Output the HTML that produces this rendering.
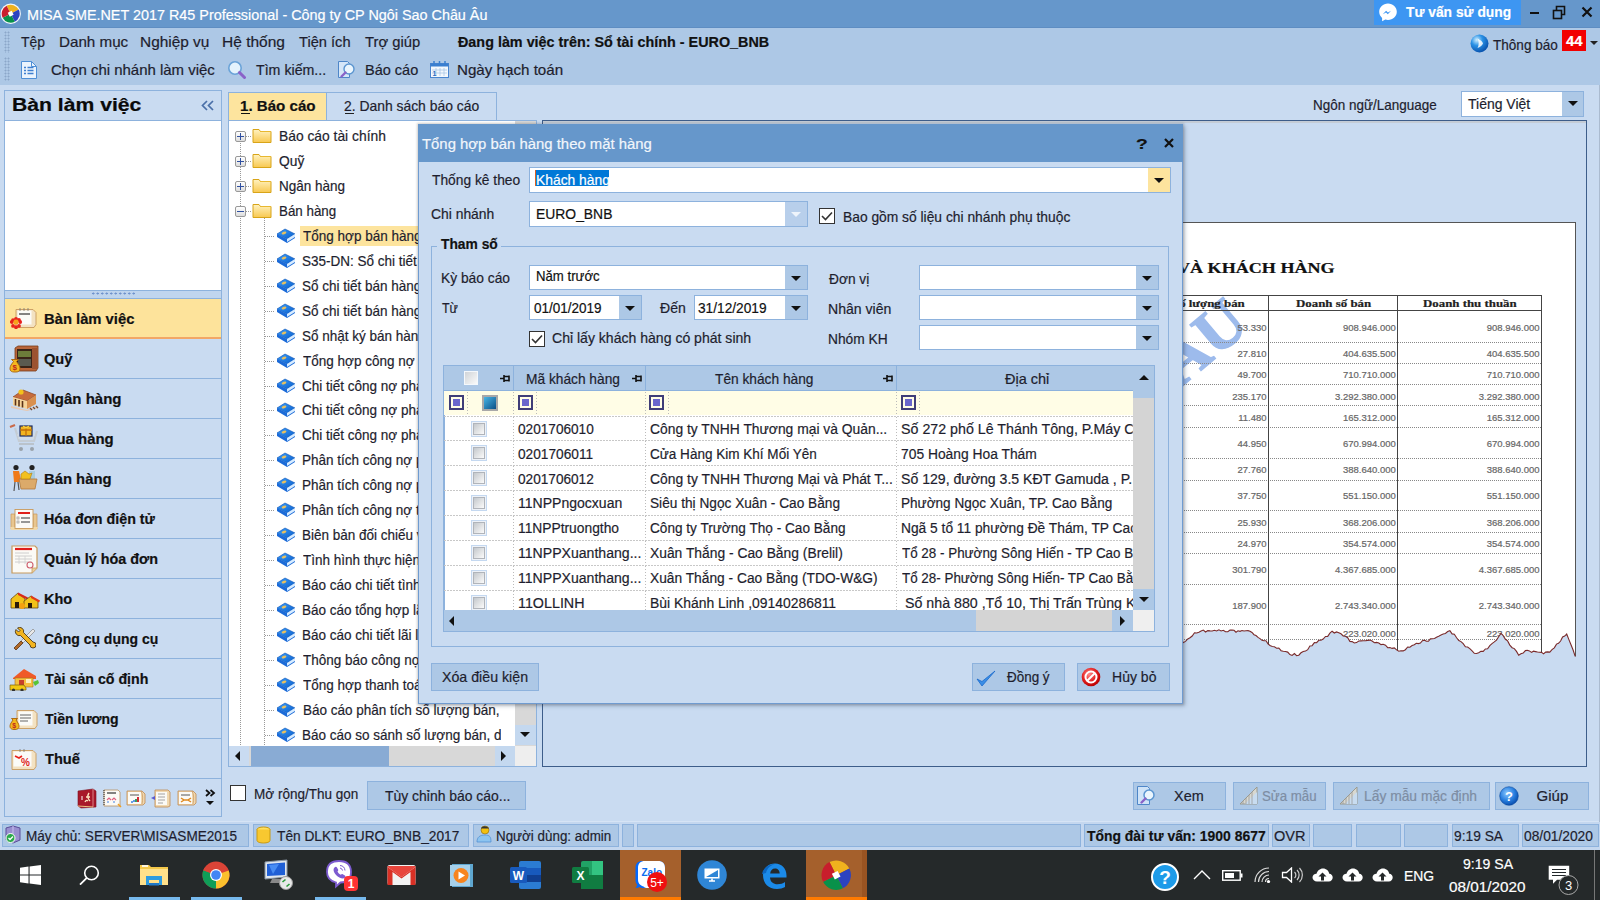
<!DOCTYPE html>
<html><head><meta charset="utf-8">
<style>
*{margin:0;padding:0;box-sizing:border-box}
html,body{width:1600px;height:900px;overflow:hidden;background:#c9dbf1;font-family:"Liberation Sans",sans-serif;font-size:14px;color:#1b1b2b}
.a{position:absolute}
.t{position:absolute;white-space:nowrap;line-height:20px;-webkit-text-stroke:0.2px currentColor}
</style></head><body>
<div class="a" style="left:0px;top:0px;width:1600px;height:28px;background:#6697cb"></div>
<div class="a" style="left:0px;top:28px;width:1600px;height:57px;background:#adc8e6"></div>
<div class="a" style="left:0px;top:27px;width:1600px;height:1px;background:#5e8dc2"></div>
<div class="a" style="left:0px;top:85px;width:1600px;height:765px;background:#c9dbf1"></div>
<svg class="a" style="left:0px;top:3px" width="22" height="22" viewBox="0 0 22 22"><circle cx="10.7" cy="10.7" r="10.2" fill="#f4f6fa"/><path d="M10.7 10.7L6.61 2.68A9 9 0 0 1 18.72 6.61Z" fill="#f0b21e"/><path d="M10.7 10.7L18.72 6.61A9 9 0 0 1 14.79 18.72Z" fill="#2c43c0"/><path d="M10.7 10.7L14.79 18.72A9 9 0 0 1 2.68 14.79Z" fill="#08914a"/><path d="M10.7 10.7L2.68 14.79A9 9 0 0 1 6.61 2.68Z" fill="#c81e2c"/><rect x="8.5" y="8.5" width="4.4" height="4.4" transform="rotate(-27 10.7 10.7)" fill="#fff"/></svg>
<div class="t" style="left:27.07px;top:5.00px;font-size:15.5px;font-weight:400;color:#ffffff;font-family:'Liberation Sans';transform:scaleX(0.9273);transform-origin:0 0;">MISA SME.NET 2017 R45 Professional - Công ty CP Ngôi Sao Châu Âu</div>
<div class="a" style="left:1374px;top:0px;width:147px;height:25px;background:#3d96f2"></div>
<svg class="a" style="left:1378px;top:2px" width="20" height="20" viewBox="0 0 20 20"><path d="M10 1.5C5 1.5 1.2 5.2 1.2 9.8c0 2.5 1.1 4.6 2.9 6.1v3.4l3.2-1.8c.9.3 1.8.4 2.7.4 5 0 8.8-3.7 8.8-8.2S15 1.5 10 1.5z" fill="#fff"/><path d="M4.8 12.3l3.3-3.6 1.8 1.8 3.2-1.8-3.3 3.6-1.8-1.8z" fill="#3d96f2"/></svg>
<div class="t" style="left:1406.00px;top:2.00px;font-size:15px;font-weight:700;color:#ffffff;font-family:'Liberation Sans';transform:scaleX(0.9204);transform-origin:0 0;">Tư vấn sử dụng</div>
<div class="a" style="left:1530px;top:12px;width:9px;height:2px;background:#111"></div>
<svg class="a" style="left:1552px;top:5px" width="15" height="15" viewBox="0 0 15 15"><rect x="1.5" y="5.5" width="8" height="8" fill="none" stroke="#111" stroke-width="1.6"/><path d="M4.5 5.5V1.5h8v8h-3" fill="none" stroke="#111" stroke-width="1.6"/></svg>
<svg class="a" style="left:1581px;top:6px" width="12" height="12" viewBox="0 0 12 12"><path d="M1.5 1.5L10.5 10.5M10.5 1.5L1.5 10.5" stroke="#111" stroke-width="2.2"/></svg>
<div class="a" style="left:4px;top:31px;width:6px;height:22px;background-image:radial-gradient(circle,#8ba7c9 0.9px,transparent 1.1px);background-size:3px 3px"></div>
<div class="a" style="left:4px;top:57px;width:6px;height:24px;background-image:radial-gradient(circle,#8ba7c9 0.9px,transparent 1.1px);background-size:3px 3px"></div>
<div class="t" style="left:21.00px;top:32.00px;font-size:14.5px;font-weight:400;color:#1e1e2e;font-family:'Liberation Sans';transform:scaleX(0.9600);transform-origin:0 0;">Tệp</div>
<div class="t" style="left:58.95px;top:32.00px;font-size:14.5px;font-weight:400;color:#1e1e2e;font-family:'Liberation Sans';transform:scaleX(1.0469);transform-origin:0 0;">Danh mục</div>
<div class="t" style="left:139.94px;top:32.00px;font-size:14.5px;font-weight:400;color:#1e1e2e;font-family:'Liberation Sans';transform:scaleX(1.0625);transform-origin:0 0;">Nghiệp vụ</div>
<div class="t" style="left:221.93px;top:32.00px;font-size:14.5px;font-weight:400;color:#1e1e2e;font-family:'Liberation Sans';transform:scaleX(1.0702);transform-origin:0 0;">Hệ thống</div>
<div class="t" style="left:299.00px;top:32.00px;font-size:14.5px;font-weight:400;color:#1e1e2e;font-family:'Liberation Sans';transform:scaleX(1.0100);transform-origin:0 0;">Tiện ích</div>
<div class="t" style="left:365.00px;top:32.00px;font-size:14.5px;font-weight:400;color:#1e1e2e;font-family:'Liberation Sans';transform:scaleX(1.0185);transform-origin:0 0;">Trợ giúp</div>
<div class="t" style="left:458.00px;top:32.00px;font-size:14.5px;font-weight:700;color:#111;font-family:'Liberation Sans';transform:scaleX(0.9904);transform-origin:0 0;">Đang làm việc trên: Sổ tài chính - EURO_BNB</div>
<svg class="a" style="left:20px;top:60px" width="18" height="19" viewBox="0 0 18 19"><path d="M1.5 1.5h10l5 5v12h-15z" fill="#eaf3fd" stroke="#4f8fd6"/><path d="M11.5 1.5v5h5" fill="none" stroke="#4f8fd6"/><path d="M4 7.5h2M4 10.5h2M4 13.5h2M7.5 7.5h6M7.5 10.5h6M7.5 13.5h6" stroke="#3f7fd0" stroke-width="1.3"/></svg>
<div class="t" style="left:51.47px;top:60.00px;font-size:14.5px;font-weight:400;color:#1e1e2e;font-family:'Liberation Sans';transform:scaleX(1.0318);transform-origin:0 0;">Chọn chi nhánh làm việc</div>
<svg class="a" style="left:227px;top:60px" width="20" height="19" viewBox="0 0 20 19"><circle cx="8" cy="8" r="6.2" fill="#e4f3fd" stroke="#6aa3d8" stroke-width="1.6"/><path d="M12.5 12.5l5 5" stroke="#8a62c8" stroke-width="3" stroke-linecap="round"/></svg>
<div class="t" style="left:256.00px;top:60.00px;font-size:14.5px;font-weight:400;color:#1e1e2e;font-family:'Liberation Sans';transform:scaleX(0.9789);transform-origin:0 0;">Tìm kiếm...</div>
<svg class="a" style="left:337px;top:60px" width="19" height="19" viewBox="0 0 19 19"><path d="M1.5 1.5h9l2 2v14h-11z" fill="#d5e6f8" stroke="#4e86c8"/><circle cx="12" cy="9" r="5" fill="#eaf5fd" stroke="#5b95d0" stroke-width="1.4"/><path d="M8.5 12.5l-4 4" stroke="#8a62c8" stroke-width="2.4" stroke-linecap="round"/></svg>
<div class="t" style="left:365.00px;top:60.00px;font-size:14.5px;font-weight:400;color:#1e1e2e;font-family:'Liberation Sans';">Báo cáo</div>
<svg class="a" style="left:430px;top:61px" width="19" height="17" viewBox="0 0 19 17"><rect x="0.5" y="2.5" width="18" height="14" fill="#f3f8fd" stroke="#4a86cf"/><rect x="0.5" y="2.5" width="18" height="3" fill="#3a7fd0"/><path d="M4 0v5M9.5 0v5M15 0v5" stroke="#3a7fd0" stroke-width="1.5"/><path d="M2 9h15M2 12h15M6 7v8M10 7v8M14 7v8" stroke="#a9c6e6" stroke-width=".8"/><text x="2.5" y="14.5" font-size="7" font-family="Liberation Sans" fill="#2a6fc0" font-weight="bold">1</text></svg>
<div class="t" style="left:456.95px;top:60.00px;font-size:14.5px;font-weight:400;color:#1e1e2e;font-family:'Liberation Sans';transform:scaleX(1.0450);transform-origin:0 0;">Ngày hạch toán</div>
<svg class="a" style="left:1470px;top:34px" width="19" height="19" viewBox="0 0 19 19"><defs><radialGradient id="gl" cx="35%" cy="30%" r="70%"><stop offset="0" stop-color="#cdeeff"/><stop offset=".45" stop-color="#2a92e6"/><stop offset="1" stop-color="#0a55b0"/></radialGradient></defs><circle cx="9.5" cy="9.5" r="9" fill="url(#gl)"/><path d="M7.5 4.5c3 1.5 5 3 5.5 5-1 2.5-3 3.5-5.5 4.5 1.5-2.5 1.5-6.5 0-9.5z" fill="#fff" opacity=".85"/></svg>
<div class="t" style="left:1493.00px;top:35.00px;font-size:14.5px;font-weight:400;color:#1e1e2e;font-family:'Liberation Sans';transform:scaleX(0.9348);transform-origin:0 0;">Thông báo</div>
<div class="a" style="left:1562px;top:30px;width:24px;height:21px;background:#f20000"></div>
<div class="t" style="left:1566.00px;top:31.00px;font-size:14px;font-weight:700;color:#fff;font-family:'Liberation Sans';transform:scaleX(1.0625);transform-origin:0 0;">44</div>
<svg class="a" style="left:1590px;top:41px" width="8" height="5" viewBox="0 0 8 5"><path d="M0 0h8L4 4z" fill="#222"/></svg>
<div class="a" style="left:4px;top:90px;width:218px;height:727px;border:1px solid #8db2dd;background:#c9dbf1"></div>
<div class="a" style="left:5px;top:120px;width:216px;height:1px;background:#8db2dd"></div>
<div class="t" style="left:12.22px;top:95.00px;font-size:18px;font-weight:700;color:#0a0a0a;font-family:'Liberation Sans';transform:scaleX(1.1750);transform-origin:0 0;">Bàn làm việc</div>
<svg class="a" style="left:201px;top:100px" width="13" height="11" viewBox="0 0 13 11"><path d="M6 1L1.5 5.5 6 10M12 1L7.5 5.5 12 10" fill="none" stroke="#4a6fa8" stroke-width="1.7"/></svg>
<div class="a" style="left:5px;top:121px;width:216px;height:169px;background:#fff"></div>
<div class="a" style="left:5px;top:290px;width:216px;height:8px;background:#c0d5ee;border-top:1px solid #8db2dd"></div>
<div class="a" style="left:91px;top:292px;width:44px;height:3px;background-image:radial-gradient(circle,#6f92cc 0.9px,transparent 1.2px);background-size:4.5px 3px"></div>
<div class="a" style="left:5px;top:298px;width:216px;height:1px;background:#8db2dd"></div>
<div class="a" style="left:5px;top:299px;width:216px;height:38px;background:#fde39b"></div>
<div class="a" style="left:5px;top:337px;width:216px;height:2px;background:#f2a766"></div>
<div class="t" style="left:44.28px;top:309.00px;font-size:14.5px;font-weight:700;color:#111;font-family:'Liberation Sans';transform:scaleX(1.0195);transform-origin:0 0;">Bàn làm việc</div>
<div class="a" style="left:5px;top:378px;width:216px;height:1px;background:#8db2dd"></div>
<div class="t" style="left:44.29px;top:349.00px;font-size:14.5px;font-weight:700;color:#111;font-family:'Liberation Sans';transform:scaleX(1.0074);transform-origin:0 0;">Quỹ</div>
<div class="a" style="left:5px;top:418px;width:216px;height:1px;background:#8db2dd"></div>
<div class="t" style="left:44.27px;top:389.00px;font-size:14.5px;font-weight:700;color:#111;font-family:'Liberation Sans';transform:scaleX(1.0342);transform-origin:0 0;">Ngân hàng</div>
<div class="a" style="left:5px;top:458px;width:216px;height:1px;background:#8db2dd"></div>
<div class="t" style="left:44.27px;top:429.00px;font-size:14.5px;font-weight:700;color:#111;font-family:'Liberation Sans';transform:scaleX(1.0303);transform-origin:0 0;">Mua hàng</div>
<div class="a" style="left:5px;top:498px;width:216px;height:1px;background:#8db2dd"></div>
<div class="t" style="left:44.28px;top:469.00px;font-size:14.5px;font-weight:700;color:#111;font-family:'Liberation Sans';transform:scaleX(1.0219);transform-origin:0 0;">Bán hàng</div>
<div class="a" style="left:5px;top:538px;width:216px;height:1px;background:#8db2dd"></div>
<div class="t" style="left:44.32px;top:509.00px;font-size:14.5px;font-weight:700;color:#111;font-family:'Liberation Sans';transform:scaleX(0.9848);transform-origin:0 0;">Hóa đơn điện tử</div>
<div class="a" style="left:5px;top:578px;width:216px;height:1px;background:#8db2dd"></div>
<div class="t" style="left:44.31px;top:549.00px;font-size:14.5px;font-weight:700;color:#111;font-family:'Liberation Sans';transform:scaleX(0.9912);transform-origin:0 0;">Quản lý hóa đơn</div>
<div class="a" style="left:5px;top:618px;width:216px;height:1px;background:#8db2dd"></div>
<div class="t" style="left:44.30px;top:589.00px;font-size:14.5px;font-weight:700;color:#111;font-family:'Liberation Sans';transform:scaleX(0.9963);transform-origin:0 0;">Kho</div>
<div class="a" style="left:5px;top:658px;width:216px;height:1px;background:#8db2dd"></div>
<div class="t" style="left:44.34px;top:629.00px;font-size:14.5px;font-weight:700;color:#111;font-family:'Liberation Sans';transform:scaleX(0.9650);transform-origin:0 0;">Công cụ dụng cụ</div>
<div class="a" style="left:5px;top:698px;width:216px;height:1px;background:#8db2dd"></div>
<div class="t" style="left:45.30px;top:669.00px;font-size:14.5px;font-weight:700;color:#111;font-family:'Liberation Sans';transform:scaleX(0.9800);transform-origin:0 0;">Tài sản cố định</div>
<div class="a" style="left:5px;top:738px;width:216px;height:1px;background:#8db2dd"></div>
<div class="t" style="left:45.30px;top:709.00px;font-size:14.5px;font-weight:700;color:#111;font-family:'Liberation Sans';transform:scaleX(0.9680);transform-origin:0 0;">Tiền lương</div>
<div class="a" style="left:5px;top:778px;width:216px;height:1px;background:#8db2dd"></div>
<div class="t" style="left:45.30px;top:749.00px;font-size:14.5px;font-weight:700;color:#111;font-family:'Liberation Sans';transform:scaleX(1.0059);transform-origin:0 0;">Thuế</div>
<div class="a" style="left:5px;top:778px;width:216px;height:1px;background:#8db2dd"></div>
<svg class="a" style="left:10px;top:307px" width="29" height="22" viewBox="0 0 29 22"><path d="M6 2.5h17l3 3v12l-2 3H6z" fill="#f3e2c2" stroke="#c89a5c" stroke-width=".9"/><path d="M7.5 3.5h14v14h-14z" fill="#fbfbf8"/><path d="M9 7h11" stroke="#333" stroke-width="1.2"/><path d="M10 1v3M14 1v3M18 1v3" stroke="#777" stroke-width=".8"/><circle cx="10.20" cy="15.00" r="1.9" fill="#e8231c"/><circle cx="8.97" cy="18.97" r="1.9" fill="#e8231c"/><circle cx="6.00" cy="20.20" r="1.9" fill="#e8231c"/><circle cx="3.03" cy="18.97" r="1.9" fill="#e8231c"/><circle cx="1.80" cy="15.01" r="1.9" fill="#e8231c"/><circle cx="3.02" cy="13.04" r="1.9" fill="#e8231c"/><circle cx="5.99" cy="11.80" r="1.9" fill="#e8231c"/><circle cx="8.96" cy="13.02" r="1.9" fill="#e8231c"/><circle cx="6" cy="15" r="2.6" fill="#f7a21a"/></svg>
<svg class="a" style="left:9px;top:345px" width="30" height="29" viewBox="0 0 30 29"><path d="M6 3l3-2h20v22l-2 3H6z" fill="#b8653a" stroke="#7a3a18" stroke-width=".8"/><rect x="8" y="4" width="15" height="19" fill="#3a2418"/><rect x="9" y="6" width="13" height="6" fill="#6d7c3a"/><rect x="9" y="14" width="13" height="7" fill="#5a5a50"/><path d="M23 3h5v21h-5z" fill="#9c5230"/><path d="M5 27c-4 0-5-3-3-7l2.5-3.5-2-2h7l-2 2L10 20c2 4 1 7-3 7z" fill="#f4b81e" stroke="#a8620c" stroke-width=".9"/><text x="3.6" y="25" font-size="8" fill="#c0261e" font-family="Liberation Sans" font-weight="bold">$</text></svg>
<svg class="a" style="left:10px;top:387px" width="30" height="24" viewBox="0 0 30 24"><path d="M3 10L13 3l13 5-9 6z" fill="#c76c3c" stroke="#8a4420" stroke-width=".7"/><path d="M17 14l9-6v9l-9 5z" fill="#d9904e"/><path d="M3 10l14 4v8L3 18z" fill="#f6d49a"/><path d="M5.5 12v6.5M9 13v6.5M12.5 14v6.5" stroke="#5a3218" stroke-width="1.6"/><circle cx="11" cy="5" r="2.6" fill="#f3c21c"/><path d="M1 19l16 4 10-4 1 2-11 3L1 21z" fill="#e8c8b0"/><path d="M20 21l2 2M23 20l2 2M26 19l2 2" stroke="#6b4a38" stroke-width="1.3"/></svg>
<svg class="a" style="left:9px;top:423px" width="30" height="31" viewBox="0 0 30 31"><path d="M1 4l5-2" stroke="#c96a4a" stroke-width="2"/><path d="M6 5l4 13h15l3-10" fill="none" stroke="#c4ccd4" stroke-width="2.2"/><path d="M8 12h18M9 15h16" stroke="#d8dde2" stroke-width="1.2"/><path d="M10 21h15" stroke="#b8c0c8" stroke-width="1.8"/><circle cx="12" cy="26" r="2" fill="#9aa2aa"/><circle cx="23" cy="26" r="2" fill="#9aa2aa"/><rect x="11" y="3" width="12" height="10" fill="#f2b420" stroke="#1c2a60" stroke-width="1.2"/><path d="M17 3v10M11 7h12" stroke="#c2700a" stroke-width="1.3"/><path d="M14 3l3 2 3-2" fill="none" stroke="#f7d040" stroke-width="1.4"/></svg>
<svg class="a" style="left:10px;top:464px" width="29" height="31" viewBox="0 0 29 31"><circle cx="6" cy="3.5" r="2.6" fill="#222"/><path d="M3 7h6l2 9-2 2H4z" fill="#f07a1a"/><path d="M5 18l-1 9M8 18l1 8" stroke="#555" stroke-width="1.2"/><circle cx="22" cy="3.5" r="2.6" fill="#222"/><path d="M19 7h6v9h-6z" fill="#a8cce0"/><path d="M9 15h18l-2 10H11z" fill="#dcaa6a" stroke="#b27a3c" stroke-width=".8"/><path d="M11 10l4-3 4 3 3-1-2 6h-9z" fill="#f2c020" stroke="#b07a10" stroke-width=".6"/></svg>
<svg class="a" style="left:9px;top:508px" width="30" height="23" viewBox="0 0 30 23"><path d="M2 6h4v15H2zM24 6h4v15h-4z" fill="#e8c690" stroke="#c89a5c" stroke-width=".7"/><path d="M1 19h28l-1 3H2z" fill="#f1d8a8"/><rect x="6" y="1.5" width="18" height="19" fill="#fbfaf6" stroke="#c89a5c" stroke-width=".9"/><path d="M9 5h12" stroke="#e0201a" stroke-width="2"/><rect x="8" y="9" width="2" height="2" fill="none" stroke="#888" stroke-width=".6"/><rect x="8" y="13" width="2" height="2" fill="none" stroke="#888" stroke-width=".6"/><path d="M12 10h9M12 14h9" stroke="#777" stroke-width="1.4"/></svg>
<svg class="a" style="left:10px;top:544px" width="29" height="30" viewBox="0 0 29 30"><path d="M2 2h23l2 2v20l-5 5H2z" fill="#fbfaf6" stroke="#c89a5c" stroke-width="1.2"/><path d="M22 29v-5h5" fill="#e8d0a0" stroke="#c89a5c" stroke-width=".8"/><path d="M5 5h17" stroke="#e01e1a" stroke-width="2.2"/><path d="M5 9h14M5 12h17M5 15h17M5 18h17" stroke="#c8c8c8" stroke-width=".9"/><path d="M9 12v8M15 12v8" stroke="#d0d0d0" stroke-width=".8"/><circle cx="20" cy="21" r="3" fill="none" stroke="#d06070" stroke-width="1.1"/></svg>
<svg class="a" style="left:9px;top:591px" width="31" height="19" viewBox="0 0 31 19"><path d="M2 8L9 2l7 6v9H2z" fill="#f2c21a" stroke="#6a4a10" stroke-width=".8"/><path d="M9 1.5l10 5-1 2-9-4.5z" fill="#d82a1a"/><path d="M15 10l7-5 7 5v7h-14z" fill="#f2c21a" stroke="#6a4a10" stroke-width=".8"/><path d="M22 4.5l9 5-1 2-8-4.5z" fill="#e03a1a"/><path d="M6 17v-6h4v6M19 17v-5h4v5" fill="#2a1a08"/><circle cx="13" cy="15" r="3" fill="#f4a010"/></svg>
<svg class="a" style="left:12px;top:627px" width="24" height="23" viewBox="0 0 24 23"><path d="M21 2l2 2-12 12-2-2z" fill="#e8e8e8" stroke="#888" stroke-width=".7"/><path d="M9 14l-7 7 2 2 7-7z" fill="#b06a2a" stroke="#5a3210" stroke-width=".8"/><path d="M4 2.5a4 4 0 0 0 4.5 6L18 18a3 3 0 1 0 3-3l-9.5-9.5A4 4 0 0 0 5.5 1L8 3.5 6.5 5z" fill="#f2b420" stroke="#3a2a10" stroke-width=".8"/></svg>
<svg class="a" style="left:9px;top:667px" width="31" height="24" viewBox="0 0 31 24"><path d="M4 11L15 2l12 7v3H4z" fill="#f05a28"/><path d="M6 11h18v9H6z" fill="#f6c040" stroke="#a87020" stroke-width=".6"/><path d="M10 13h5v7h-5z" fill="#c8402a"/><path d="M17 12h5v4h-5z" fill="#fff0c0"/><path d="M1 18h14l2 3v2H1z" fill="#f2c812" stroke="#7a6010" stroke-width=".7"/><circle cx="4.5" cy="23" r="1.6" fill="#333"/><circle cx="13" cy="23" r="1.6" fill="#333"/><path d="M24 15l5-2 1 3-4 3z" fill="#56c436"/></svg>
<svg class="a" style="left:9px;top:708px" width="30" height="22" viewBox="0 0 30 22"><path d="M8 2.5h17l3 3v12l-2 3H8z" fill="#f3e2c2" stroke="#c89a5c" stroke-width=".9"/><path d="M9.5 3.5h14v14h-14z" fill="#fbfbf8"/><path d="M11 7h11M11 10h11M11 13h8" stroke="#666" stroke-width="1"/><path d="M5 21.5c-4 0-5-3-3-6.5l2-3-1.5-1.5h6L7 12l2 3c2 3.5 1 6.5-3 6.5z" fill="#f4b81e" stroke="#a8620c" stroke-width=".9"/><text x="3.3" y="20" font-size="7" fill="#c0261e" font-family="Liberation Sans" font-weight="bold">$</text></svg>
<svg class="a" style="left:10px;top:748px" width="29" height="23" viewBox="0 0 29 23"><path d="M2 2.5h21l3 3v13l-2 3H2z" fill="#f3e2c2" stroke="#c89a5c" stroke-width=".9"/><path d="M3.5 3.5h18v15h-18z" fill="#fbfbf8"/><path d="M10 1v3M14 1v3" stroke="#777" stroke-width=".8"/><path d="M5 8l4 2 3-2" fill="none" stroke="#e8201a" stroke-width="1.6"/><text x="11" y="18" font-size="10" fill="#e01e1a" font-family="Liberation Sans" font-weight="bold">%</text></svg>
<svg class="a" style="left:77px;top:788px" width="21" height="21" viewBox="0 0 21 21"><path d="M1 3l15-2 3 2v16l-15 1-3-2z" fill="#a8182a" stroke="#7a1020" stroke-width=".6"/><path d="M16 1v18" stroke="#e8a0a0" stroke-width=".8"/><path d="M1 18l15 1" stroke="#f0c080" stroke-width="1"/><path d="M4 9h2M4 11h2" stroke="#fff" stroke-width="1"/><path d="M8 14c1-2 2-2 3-1M12 5c-2 3-1 6 1 8M9 9h4" fill="none" stroke="#fbe4c0" stroke-width="1.4"/></svg>
<svg class="a" style="left:102px;top:788px" width="20" height="20" viewBox="0 0 20 20"><path d="M2 2h14l2 2v14H2z" fill="#fbfaf6" stroke="#b89060" stroke-width=".8"/><path d="M5 5h9" stroke="#333" stroke-width="1.2"/><path d="M2 2v16" stroke="#555" stroke-width="1.4" stroke-dasharray="1 1"/><path d="M5 12l2-2 2 2M10 12l2-2 2 2" stroke="#e06080" stroke-width="1.2" fill="none"/><path d="M5 14h2M11 14h2" stroke="#4080e0" stroke-width="1.2"/><path d="M16 16l3 3" stroke="#f0a020" stroke-width="1.5"/></svg>
<svg class="a" style="left:126px;top:789px" width="21" height="17" viewBox="0 0 21 17"><path d="M1 2h15l3 3v9l-2 2H1z" fill="#f0d8b0" stroke="#c08a50" stroke-width=".8"/><path d="M2 3h13v12H2z" fill="#fbfaf6"/><path d="M15 2c2 3 2 9 1 13" stroke="#c08a50" stroke-width=".6" fill="none"/><path d="M4 6h9" stroke="#555" stroke-width="1"/><path d="M5 13h2M8 13v-2M10 13v-3M12 13v-5" stroke-width="1.6" stroke="#3a80e0"/><path d="M10 13v-3" stroke="#2aa040" stroke-width="1.6"/><path d="M12 13v-5" stroke="#e02020" stroke-width="1.8"/></svg>
<svg class="a" style="left:151px;top:789px" width="21" height="19" viewBox="0 0 21 19"><path d="M4 1h13l2 2v14l-2 1H4z" fill="#f0d8b0" stroke="#c08a50" stroke-width=".8"/><path d="M5 3h11v13H5z" fill="#fbfaf6"/><path d="M7 5h7M7 8h7M7 11h7M7 14h5" stroke="#999" stroke-width=".9"/><path d="M0 9l4-2v4z" fill="#5a5ad0"/></svg>
<svg class="a" style="left:177px;top:789px" width="21" height="17" viewBox="0 0 21 17"><path d="M1 2h15l3 3v9l-2 2H1z" fill="#f0d8b0" stroke="#c08a50" stroke-width=".8"/><path d="M2 3h13v12H2z" fill="#fbfaf6"/><path d="M15 2c2 3 2 9 1 13" stroke="#c08a50" stroke-width=".6" fill="none"/><path d="M4 6h9" stroke="#555" stroke-width="1"/><path d="M4 9l3 2-3 2M14 9l-3 2 3 2M7 11h4" stroke="#e08a20" stroke-width="1.5" fill="none"/></svg>
<svg class="a" style="left:204px;top:787px" width="12" height="22" viewBox="0 0 12 22"><path d="M2 3l3.5 3-3.5 3M6.5 3l3.5 3-3.5 3" fill="none" stroke="#111" stroke-width="1.8"/><path d="M2 14h8l-4 4z" fill="#111"/></svg>
<div class="a" style="left:228px;top:92px;width:269px;height:29px;border:1px solid #8db2dd;border-bottom:none;background:#c9dbf1"></div>
<div class="a" style="left:229px;top:93px;width:97px;height:28px;background:#fde49e"></div>
<div class="a" style="left:326px;top:93px;width:1px;height:28px;background:#8db2dd"></div>
<div class="t" style="left:239.96px;top:95.50px;font-size:14.5px;font-weight:700;color:#111;font-family:'Liberation Sans';transform:scaleX(1.0423);transform-origin:0 0;">1. Báo cáo</div>
<div class="a" style="left:241px;top:113px;width:9px;height:1px;background:#111"></div>
<div class="t" style="left:343.74px;top:95.80px;font-size:14.5px;font-weight:400;color:#1e1e2e;font-family:'Liberation Sans';transform:scaleX(0.9579);transform-origin:0 0;">2. Danh sách báo cáo</div>
<div class="a" style="left:345px;top:113px;width:9px;height:1px;background:#222"></div>
<div class="a" style="left:228px;top:120px;width:309px;height:647px;border:1px solid #8db2dd;background:#fff"></div>
<div class="a" style="left:240px;top:141px;width:1px;height:75px;background-image:linear-gradient(#999 50%,transparent 50%);background-size:1px 2px"></div>
<div class="a" style="left:264px;top:216px;width:1px;height:535px;background-image:linear-gradient(#999 50%,transparent 50%);background-size:1px 2px"></div>
<div class="a" style="left:240px;top:216px;width:1px;height:535px;background-image:linear-gradient(#999 50%,transparent 50%);background-size:1px 2px"></div>
<div class="a" style="left:235px;top:131px;width:11px;height:11px;border:1px solid #999;border-radius:2px;background:linear-gradient(#fff,#ddd)"></div>
<div class="a" style="left:237px;top:136px;width:7px;height:1px;background:#3050a0"></div>
<div class="a" style="left:240px;top:133px;width:1px;height:7px;background:#3050a0"></div>
<div class="a" style="left:246px;top:136px;width:6px;height:1px;background-image:linear-gradient(90deg,#999 50%,transparent 50%);background-size:2px 1px"></div>
<svg class="a" style="left:252px;top:127px" width="20" height="17" viewBox="0 0 20 17"><defs><linearGradient id="fg" x1="0" y1="0" x2="0" y2="1"><stop offset="0" stop-color="#fff2c0"/><stop offset="1" stop-color="#f8c850"/></linearGradient></defs><path d="M1 2.5h6l1.5 2H19v11H1z" fill="url(#fg)" stroke="#d8a418"/><path d="M8 4.5h11" stroke="#e8b830"/></svg>
<div class="t" style="left:278.68px;top:126.20px;font-size:15px;font-weight:400;color:#1e1e2e;font-family:'Liberation Sans';transform:scaleX(0.9219);transform-origin:0 0;">Báo cáo tài chính</div>
<div class="a" style="left:235px;top:156px;width:11px;height:11px;border:1px solid #999;border-radius:2px;background:linear-gradient(#fff,#ddd)"></div>
<div class="a" style="left:237px;top:161px;width:7px;height:1px;background:#3050a0"></div>
<div class="a" style="left:240px;top:158px;width:1px;height:7px;background:#3050a0"></div>
<div class="a" style="left:246px;top:161px;width:6px;height:1px;background-image:linear-gradient(90deg,#999 50%,transparent 50%);background-size:2px 1px"></div>
<svg class="a" style="left:252px;top:152px" width="20" height="17" viewBox="0 0 20 17"><defs><linearGradient id="fg1" x1="0" y1="0" x2="0" y2="1"><stop offset="0" stop-color="#fff2c0"/><stop offset="1" stop-color="#f8c850"/></linearGradient></defs><path d="M1 2.5h6l1.5 2H19v11H1z" fill="url(#fg1)" stroke="#d8a418"/><path d="M8 4.5h11" stroke="#e8b830"/></svg>
<div class="t" style="left:278.68px;top:151.13px;font-size:15px;font-weight:400;color:#1e1e2e;font-family:'Liberation Sans';transform:scaleX(0.9185);transform-origin:0 0;">Quỹ</div>
<div class="a" style="left:235px;top:181px;width:11px;height:11px;border:1px solid #999;border-radius:2px;background:linear-gradient(#fff,#ddd)"></div>
<div class="a" style="left:237px;top:186px;width:7px;height:1px;background:#3050a0"></div>
<div class="a" style="left:240px;top:183px;width:1px;height:7px;background:#3050a0"></div>
<div class="a" style="left:246px;top:186px;width:6px;height:1px;background-image:linear-gradient(90deg,#999 50%,transparent 50%);background-size:2px 1px"></div>
<svg class="a" style="left:252px;top:177px" width="20" height="17" viewBox="0 0 20 17"><defs><linearGradient id="fg2" x1="0" y1="0" x2="0" y2="1"><stop offset="0" stop-color="#fff2c0"/><stop offset="1" stop-color="#f8c850"/></linearGradient></defs><path d="M1 2.5h6l1.5 2H19v11H1z" fill="url(#fg2)" stroke="#d8a418"/><path d="M8 4.5h11" stroke="#e8b830"/></svg>
<div class="t" style="left:278.70px;top:176.06px;font-size:15px;font-weight:400;color:#1e1e2e;font-family:'Liberation Sans';transform:scaleX(0.9000);transform-origin:0 0;">Ngân hàng</div>
<div class="a" style="left:235px;top:206px;width:11px;height:11px;border:1px solid #999;border-radius:2px;background:linear-gradient(#fff,#ddd)"></div>
<div class="a" style="left:237px;top:211px;width:7px;height:1px;background:#3050a0"></div>
<div class="a" style="left:246px;top:211px;width:6px;height:1px;background-image:linear-gradient(90deg,#999 50%,transparent 50%);background-size:2px 1px"></div>
<svg class="a" style="left:252px;top:202px" width="20" height="17" viewBox="0 0 20 17"><defs><linearGradient id="fg3" x1="0" y1="0" x2="0" y2="1"><stop offset="0" stop-color="#fff2c0"/><stop offset="1" stop-color="#f8c850"/></linearGradient></defs><path d="M1 2.5h6l1.5 2H19v11H1z" fill="url(#fg3)" stroke="#d8a418"/><path d="M8 4.5h11" stroke="#e8b830"/></svg>
<div class="t" style="left:278.71px;top:200.99px;font-size:15px;font-weight:400;color:#1e1e2e;font-family:'Liberation Sans';transform:scaleX(0.8905);transform-origin:0 0;">Bán hàng</div>
<div class="a" style="left:300px;top:226px;width:118px;height:20px;background:#fde49e"></div>
<div class="a" style="left:265px;top:236px;width:10px;height:1px;background-image:linear-gradient(90deg,#999 50%,transparent 50%);background-size:2px 1px"></div>
<svg class="a" style="left:276px;top:228px" width="20" height="16" viewBox="0 0 20 16"><defs><linearGradient id="bk0" x1="0" y1="0" x2="1" y2="1"><stop offset="0" stop-color="#3aa0ff"/><stop offset="1" stop-color="#0a5cc8"/></linearGradient></defs><path d="M1 6l8-5 10 5-8 5z" fill="url(#bk0)" stroke="#0a4fb0" stroke-width=".6"/><path d="M1 6v3l10 6 8-5V6l-8 5z" fill="#1a6ad8"/><path d="M11 11l8-5v3l-8 5z" fill="#d8ecff"/><ellipse cx="8" cy="5" rx="2.5" ry="1.2" fill="#e8c060" transform="rotate(-20 8 5)"/></svg>
<div class="t" style="left:302.80px;top:225.92px;width:220.2px;overflow:hidden;font-size:15px;font-weight:400;color:#1e1e2e;font-family:'Liberation Sans';transform:scaleX(0.9000);transform-origin:0 0;">Tổng hợp bán hàng theo mặt hàng</div>
<div class="a" style="left:265px;top:261px;width:10px;height:1px;background-image:linear-gradient(90deg,#999 50%,transparent 50%);background-size:2px 1px"></div>
<svg class="a" style="left:276px;top:253px" width="20" height="16" viewBox="0 0 20 16"><defs><linearGradient id="bk1" x1="0" y1="0" x2="1" y2="1"><stop offset="0" stop-color="#3aa0ff"/><stop offset="1" stop-color="#0a5cc8"/></linearGradient></defs><path d="M1 6l8-5 10 5-8 5z" fill="url(#bk1)" stroke="#0a4fb0" stroke-width=".6"/><path d="M1 6v3l10 6 8-5V6l-8 5z" fill="#1a6ad8"/><path d="M11 11l8-5v3l-8 5z" fill="#d8ecff"/><ellipse cx="8" cy="5" rx="2.5" ry="1.2" fill="#e8c060" transform="rotate(-20 8 5)"/></svg>
<div class="t" style="left:301.90px;top:250.85px;width:221.2px;overflow:hidden;font-size:15px;font-weight:400;color:#1e1e2e;font-family:'Liberation Sans';transform:scaleX(0.9000);transform-origin:0 0;">S35-DN: Sổ chi tiết bán hàng</div>
<div class="a" style="left:265px;top:286px;width:10px;height:1px;background-image:linear-gradient(90deg,#999 50%,transparent 50%);background-size:2px 1px"></div>
<svg class="a" style="left:276px;top:278px" width="20" height="16" viewBox="0 0 20 16"><defs><linearGradient id="bk2" x1="0" y1="0" x2="1" y2="1"><stop offset="0" stop-color="#3aa0ff"/><stop offset="1" stop-color="#0a5cc8"/></linearGradient></defs><path d="M1 6l8-5 10 5-8 5z" fill="url(#bk2)" stroke="#0a4fb0" stroke-width=".6"/><path d="M1 6v3l10 6 8-5V6l-8 5z" fill="#1a6ad8"/><path d="M11 11l8-5v3l-8 5z" fill="#d8ecff"/><ellipse cx="8" cy="5" rx="2.5" ry="1.2" fill="#e8c060" transform="rotate(-20 8 5)"/></svg>
<div class="t" style="left:301.90px;top:275.78px;width:221.2px;overflow:hidden;font-size:15px;font-weight:400;color:#1e1e2e;font-family:'Liberation Sans';transform:scaleX(0.9000);transform-origin:0 0;">Sổ chi tiết bán hàng theo khách hàng</div>
<div class="a" style="left:265px;top:311px;width:10px;height:1px;background-image:linear-gradient(90deg,#999 50%,transparent 50%);background-size:2px 1px"></div>
<svg class="a" style="left:276px;top:303px" width="20" height="16" viewBox="0 0 20 16"><defs><linearGradient id="bk3" x1="0" y1="0" x2="1" y2="1"><stop offset="0" stop-color="#3aa0ff"/><stop offset="1" stop-color="#0a5cc8"/></linearGradient></defs><path d="M1 6l8-5 10 5-8 5z" fill="url(#bk3)" stroke="#0a4fb0" stroke-width=".6"/><path d="M1 6v3l10 6 8-5V6l-8 5z" fill="#1a6ad8"/><path d="M11 11l8-5v3l-8 5z" fill="#d8ecff"/><ellipse cx="8" cy="5" rx="2.5" ry="1.2" fill="#e8c060" transform="rotate(-20 8 5)"/></svg>
<div class="t" style="left:301.90px;top:300.71px;width:221.2px;overflow:hidden;font-size:15px;font-weight:400;color:#1e1e2e;font-family:'Liberation Sans';transform:scaleX(0.9000);transform-origin:0 0;">Sổ chi tiết bán hàng theo mặt hàng</div>
<div class="a" style="left:265px;top:336px;width:10px;height:1px;background-image:linear-gradient(90deg,#999 50%,transparent 50%);background-size:2px 1px"></div>
<svg class="a" style="left:276px;top:328px" width="20" height="16" viewBox="0 0 20 16"><defs><linearGradient id="bk4" x1="0" y1="0" x2="1" y2="1"><stop offset="0" stop-color="#3aa0ff"/><stop offset="1" stop-color="#0a5cc8"/></linearGradient></defs><path d="M1 6l8-5 10 5-8 5z" fill="url(#bk4)" stroke="#0a4fb0" stroke-width=".6"/><path d="M1 6v3l10 6 8-5V6l-8 5z" fill="#1a6ad8"/><path d="M11 11l8-5v3l-8 5z" fill="#d8ecff"/><ellipse cx="8" cy="5" rx="2.5" ry="1.2" fill="#e8c060" transform="rotate(-20 8 5)"/></svg>
<div class="t" style="left:301.90px;top:325.64px;width:221.2px;overflow:hidden;font-size:15px;font-weight:400;color:#1e1e2e;font-family:'Liberation Sans';transform:scaleX(0.9000);transform-origin:0 0;">Sổ nhật ký bán hàng</div>
<div class="a" style="left:265px;top:361px;width:10px;height:1px;background-image:linear-gradient(90deg,#999 50%,transparent 50%);background-size:2px 1px"></div>
<svg class="a" style="left:276px;top:353px" width="20" height="16" viewBox="0 0 20 16"><defs><linearGradient id="bk5" x1="0" y1="0" x2="1" y2="1"><stop offset="0" stop-color="#3aa0ff"/><stop offset="1" stop-color="#0a5cc8"/></linearGradient></defs><path d="M1 6l8-5 10 5-8 5z" fill="url(#bk5)" stroke="#0a4fb0" stroke-width=".6"/><path d="M1 6v3l10 6 8-5V6l-8 5z" fill="#1a6ad8"/><path d="M11 11l8-5v3l-8 5z" fill="#d8ecff"/><ellipse cx="8" cy="5" rx="2.5" ry="1.2" fill="#e8c060" transform="rotate(-20 8 5)"/></svg>
<div class="t" style="left:302.80px;top:350.57px;width:220.2px;overflow:hidden;font-size:15px;font-weight:400;color:#1e1e2e;font-family:'Liberation Sans';transform:scaleX(0.9000);transform-origin:0 0;">Tổng hợp công nợ phải thu khách hàng</div>
<div class="a" style="left:265px;top:386px;width:10px;height:1px;background-image:linear-gradient(90deg,#999 50%,transparent 50%);background-size:2px 1px"></div>
<svg class="a" style="left:276px;top:378px" width="20" height="16" viewBox="0 0 20 16"><defs><linearGradient id="bk6" x1="0" y1="0" x2="1" y2="1"><stop offset="0" stop-color="#3aa0ff"/><stop offset="1" stop-color="#0a5cc8"/></linearGradient></defs><path d="M1 6l8-5 10 5-8 5z" fill="url(#bk6)" stroke="#0a4fb0" stroke-width=".6"/><path d="M1 6v3l10 6 8-5V6l-8 5z" fill="#1a6ad8"/><path d="M11 11l8-5v3l-8 5z" fill="#d8ecff"/><ellipse cx="8" cy="5" rx="2.5" ry="1.2" fill="#e8c060" transform="rotate(-20 8 5)"/></svg>
<div class="t" style="left:301.90px;top:375.50px;width:221.2px;overflow:hidden;font-size:15px;font-weight:400;color:#1e1e2e;font-family:'Liberation Sans';transform:scaleX(0.9000);transform-origin:0 0;">Chi tiết công nợ phải thu khách hàng</div>
<div class="a" style="left:265px;top:410px;width:10px;height:1px;background-image:linear-gradient(90deg,#999 50%,transparent 50%);background-size:2px 1px"></div>
<svg class="a" style="left:276px;top:402px" width="20" height="16" viewBox="0 0 20 16"><defs><linearGradient id="bk7" x1="0" y1="0" x2="1" y2="1"><stop offset="0" stop-color="#3aa0ff"/><stop offset="1" stop-color="#0a5cc8"/></linearGradient></defs><path d="M1 6l8-5 10 5-8 5z" fill="url(#bk7)" stroke="#0a4fb0" stroke-width=".6"/><path d="M1 6v3l10 6 8-5V6l-8 5z" fill="#1a6ad8"/><path d="M11 11l8-5v3l-8 5z" fill="#d8ecff"/><ellipse cx="8" cy="5" rx="2.5" ry="1.2" fill="#e8c060" transform="rotate(-20 8 5)"/></svg>
<div class="t" style="left:301.90px;top:400.43px;width:221.2px;overflow:hidden;font-size:15px;font-weight:400;color:#1e1e2e;font-family:'Liberation Sans';transform:scaleX(0.9000);transform-origin:0 0;">Chi tiết công nợ phải thu theo hóa đơn</div>
<div class="a" style="left:265px;top:435px;width:10px;height:1px;background-image:linear-gradient(90deg,#999 50%,transparent 50%);background-size:2px 1px"></div>
<svg class="a" style="left:276px;top:427px" width="20" height="16" viewBox="0 0 20 16"><defs><linearGradient id="bk8" x1="0" y1="0" x2="1" y2="1"><stop offset="0" stop-color="#3aa0ff"/><stop offset="1" stop-color="#0a5cc8"/></linearGradient></defs><path d="M1 6l8-5 10 5-8 5z" fill="url(#bk8)" stroke="#0a4fb0" stroke-width=".6"/><path d="M1 6v3l10 6 8-5V6l-8 5z" fill="#1a6ad8"/><path d="M11 11l8-5v3l-8 5z" fill="#d8ecff"/><ellipse cx="8" cy="5" rx="2.5" ry="1.2" fill="#e8c060" transform="rotate(-20 8 5)"/></svg>
<div class="t" style="left:301.90px;top:425.36px;width:221.2px;overflow:hidden;font-size:15px;font-weight:400;color:#1e1e2e;font-family:'Liberation Sans';transform:scaleX(0.9000);transform-origin:0 0;">Chi tiết công nợ phải thu theo nhân viên</div>
<div class="a" style="left:265px;top:460px;width:10px;height:1px;background-image:linear-gradient(90deg,#999 50%,transparent 50%);background-size:2px 1px"></div>
<svg class="a" style="left:276px;top:452px" width="20" height="16" viewBox="0 0 20 16"><defs><linearGradient id="bk9" x1="0" y1="0" x2="1" y2="1"><stop offset="0" stop-color="#3aa0ff"/><stop offset="1" stop-color="#0a5cc8"/></linearGradient></defs><path d="M1 6l8-5 10 5-8 5z" fill="url(#bk9)" stroke="#0a4fb0" stroke-width=".6"/><path d="M1 6v3l10 6 8-5V6l-8 5z" fill="#1a6ad8"/><path d="M11 11l8-5v3l-8 5z" fill="#d8ecff"/><ellipse cx="8" cy="5" rx="2.5" ry="1.2" fill="#e8c060" transform="rotate(-20 8 5)"/></svg>
<div class="t" style="left:301.90px;top:450.29px;width:221.2px;overflow:hidden;font-size:15px;font-weight:400;color:#1e1e2e;font-family:'Liberation Sans';transform:scaleX(0.9000);transform-origin:0 0;">Phân tích công nợ phải thu theo tuổi nợ</div>
<div class="a" style="left:265px;top:485px;width:10px;height:1px;background-image:linear-gradient(90deg,#999 50%,transparent 50%);background-size:2px 1px"></div>
<svg class="a" style="left:276px;top:477px" width="20" height="16" viewBox="0 0 20 16"><defs><linearGradient id="bk10" x1="0" y1="0" x2="1" y2="1"><stop offset="0" stop-color="#3aa0ff"/><stop offset="1" stop-color="#0a5cc8"/></linearGradient></defs><path d="M1 6l8-5 10 5-8 5z" fill="url(#bk10)" stroke="#0a4fb0" stroke-width=".6"/><path d="M1 6v3l10 6 8-5V6l-8 5z" fill="#1a6ad8"/><path d="M11 11l8-5v3l-8 5z" fill="#d8ecff"/><ellipse cx="8" cy="5" rx="2.5" ry="1.2" fill="#e8c060" transform="rotate(-20 8 5)"/></svg>
<div class="t" style="left:301.90px;top:475.22px;width:221.2px;overflow:hidden;font-size:15px;font-weight:400;color:#1e1e2e;font-family:'Liberation Sans';transform:scaleX(0.9000);transform-origin:0 0;">Phân tích công nợ phải thu quá hạn</div>
<div class="a" style="left:265px;top:510px;width:10px;height:1px;background-image:linear-gradient(90deg,#999 50%,transparent 50%);background-size:2px 1px"></div>
<svg class="a" style="left:276px;top:502px" width="20" height="16" viewBox="0 0 20 16"><defs><linearGradient id="bk11" x1="0" y1="0" x2="1" y2="1"><stop offset="0" stop-color="#3aa0ff"/><stop offset="1" stop-color="#0a5cc8"/></linearGradient></defs><path d="M1 6l8-5 10 5-8 5z" fill="url(#bk11)" stroke="#0a4fb0" stroke-width=".6"/><path d="M1 6v3l10 6 8-5V6l-8 5z" fill="#1a6ad8"/><path d="M11 11l8-5v3l-8 5z" fill="#d8ecff"/><ellipse cx="8" cy="5" rx="2.5" ry="1.2" fill="#e8c060" transform="rotate(-20 8 5)"/></svg>
<div class="t" style="left:301.90px;top:500.15px;width:221.2px;overflow:hidden;font-size:15px;font-weight:400;color:#1e1e2e;font-family:'Liberation Sans';transform:scaleX(0.9000);transform-origin:0 0;">Phân tích công nợ theo nhân viên</div>
<div class="a" style="left:265px;top:535px;width:10px;height:1px;background-image:linear-gradient(90deg,#999 50%,transparent 50%);background-size:2px 1px"></div>
<svg class="a" style="left:276px;top:527px" width="20" height="16" viewBox="0 0 20 16"><defs><linearGradient id="bk12" x1="0" y1="0" x2="1" y2="1"><stop offset="0" stop-color="#3aa0ff"/><stop offset="1" stop-color="#0a5cc8"/></linearGradient></defs><path d="M1 6l8-5 10 5-8 5z" fill="url(#bk12)" stroke="#0a4fb0" stroke-width=".6"/><path d="M1 6v3l10 6 8-5V6l-8 5z" fill="#1a6ad8"/><path d="M11 11l8-5v3l-8 5z" fill="#d8ecff"/><ellipse cx="8" cy="5" rx="2.5" ry="1.2" fill="#e8c060" transform="rotate(-20 8 5)"/></svg>
<div class="t" style="left:301.90px;top:525.08px;width:221.2px;overflow:hidden;font-size:15px;font-weight:400;color:#1e1e2e;font-family:'Liberation Sans';transform:scaleX(0.9000);transform-origin:0 0;">Biên bản đối chiếu và xác nhận công nợ</div>
<div class="a" style="left:265px;top:560px;width:10px;height:1px;background-image:linear-gradient(90deg,#999 50%,transparent 50%);background-size:2px 1px"></div>
<svg class="a" style="left:276px;top:552px" width="20" height="16" viewBox="0 0 20 16"><defs><linearGradient id="bk13" x1="0" y1="0" x2="1" y2="1"><stop offset="0" stop-color="#3aa0ff"/><stop offset="1" stop-color="#0a5cc8"/></linearGradient></defs><path d="M1 6l8-5 10 5-8 5z" fill="url(#bk13)" stroke="#0a4fb0" stroke-width=".6"/><path d="M1 6v3l10 6 8-5V6l-8 5z" fill="#1a6ad8"/><path d="M11 11l8-5v3l-8 5z" fill="#d8ecff"/><ellipse cx="8" cy="5" rx="2.5" ry="1.2" fill="#e8c060" transform="rotate(-20 8 5)"/></svg>
<div class="t" style="left:302.80px;top:550.01px;width:220.2px;overflow:hidden;font-size:15px;font-weight:400;color:#1e1e2e;font-family:'Liberation Sans';transform:scaleX(0.9000);transform-origin:0 0;">Tình hình thực hiện hợp đồng bán</div>
<div class="a" style="left:265px;top:585px;width:10px;height:1px;background-image:linear-gradient(90deg,#999 50%,transparent 50%);background-size:2px 1px"></div>
<svg class="a" style="left:276px;top:577px" width="20" height="16" viewBox="0 0 20 16"><defs><linearGradient id="bk14" x1="0" y1="0" x2="1" y2="1"><stop offset="0" stop-color="#3aa0ff"/><stop offset="1" stop-color="#0a5cc8"/></linearGradient></defs><path d="M1 6l8-5 10 5-8 5z" fill="url(#bk14)" stroke="#0a4fb0" stroke-width=".6"/><path d="M1 6v3l10 6 8-5V6l-8 5z" fill="#1a6ad8"/><path d="M11 11l8-5v3l-8 5z" fill="#d8ecff"/><ellipse cx="8" cy="5" rx="2.5" ry="1.2" fill="#e8c060" transform="rotate(-20 8 5)"/></svg>
<div class="t" style="left:301.90px;top:574.94px;width:221.2px;overflow:hidden;font-size:15px;font-weight:400;color:#1e1e2e;font-family:'Liberation Sans';transform:scaleX(0.9000);transform-origin:0 0;">Báo cáo chi tiết tình hình bán hàng</div>
<div class="a" style="left:265px;top:610px;width:10px;height:1px;background-image:linear-gradient(90deg,#999 50%,transparent 50%);background-size:2px 1px"></div>
<svg class="a" style="left:276px;top:602px" width="20" height="16" viewBox="0 0 20 16"><defs><linearGradient id="bk15" x1="0" y1="0" x2="1" y2="1"><stop offset="0" stop-color="#3aa0ff"/><stop offset="1" stop-color="#0a5cc8"/></linearGradient></defs><path d="M1 6l8-5 10 5-8 5z" fill="url(#bk15)" stroke="#0a4fb0" stroke-width=".6"/><path d="M1 6v3l10 6 8-5V6l-8 5z" fill="#1a6ad8"/><path d="M11 11l8-5v3l-8 5z" fill="#d8ecff"/><ellipse cx="8" cy="5" rx="2.5" ry="1.2" fill="#e8c060" transform="rotate(-20 8 5)"/></svg>
<div class="t" style="left:301.90px;top:599.87px;width:221.2px;overflow:hidden;font-size:15px;font-weight:400;color:#1e1e2e;font-family:'Liberation Sans';transform:scaleX(0.9000);transform-origin:0 0;">Báo cáo tổng hợp lãi lỗ theo mặt hàng</div>
<div class="a" style="left:265px;top:635px;width:10px;height:1px;background-image:linear-gradient(90deg,#999 50%,transparent 50%);background-size:2px 1px"></div>
<svg class="a" style="left:276px;top:627px" width="20" height="16" viewBox="0 0 20 16"><defs><linearGradient id="bk16" x1="0" y1="0" x2="1" y2="1"><stop offset="0" stop-color="#3aa0ff"/><stop offset="1" stop-color="#0a5cc8"/></linearGradient></defs><path d="M1 6l8-5 10 5-8 5z" fill="url(#bk16)" stroke="#0a4fb0" stroke-width=".6"/><path d="M1 6v3l10 6 8-5V6l-8 5z" fill="#1a6ad8"/><path d="M11 11l8-5v3l-8 5z" fill="#d8ecff"/><ellipse cx="8" cy="5" rx="2.5" ry="1.2" fill="#e8c060" transform="rotate(-20 8 5)"/></svg>
<div class="t" style="left:301.90px;top:624.80px;width:221.2px;overflow:hidden;font-size:15px;font-weight:400;color:#1e1e2e;font-family:'Liberation Sans';transform:scaleX(0.9000);transform-origin:0 0;">Báo cáo chi tiết lãi lỗ theo hóa đơn</div>
<div class="a" style="left:265px;top:660px;width:10px;height:1px;background-image:linear-gradient(90deg,#999 50%,transparent 50%);background-size:2px 1px"></div>
<svg class="a" style="left:276px;top:652px" width="20" height="16" viewBox="0 0 20 16"><defs><linearGradient id="bk17" x1="0" y1="0" x2="1" y2="1"><stop offset="0" stop-color="#3aa0ff"/><stop offset="1" stop-color="#0a5cc8"/></linearGradient></defs><path d="M1 6l8-5 10 5-8 5z" fill="url(#bk17)" stroke="#0a4fb0" stroke-width=".6"/><path d="M1 6v3l10 6 8-5V6l-8 5z" fill="#1a6ad8"/><path d="M11 11l8-5v3l-8 5z" fill="#d8ecff"/><ellipse cx="8" cy="5" rx="2.5" ry="1.2" fill="#e8c060" transform="rotate(-20 8 5)"/></svg>
<div class="t" style="left:302.80px;top:649.73px;width:220.2px;overflow:hidden;font-size:15px;font-weight:400;color:#1e1e2e;font-family:'Liberation Sans';transform:scaleX(0.9000);transform-origin:0 0;">Thông báo công nợ khách hàng</div>
<div class="a" style="left:265px;top:685px;width:10px;height:1px;background-image:linear-gradient(90deg,#999 50%,transparent 50%);background-size:2px 1px"></div>
<svg class="a" style="left:276px;top:677px" width="20" height="16" viewBox="0 0 20 16"><defs><linearGradient id="bk18" x1="0" y1="0" x2="1" y2="1"><stop offset="0" stop-color="#3aa0ff"/><stop offset="1" stop-color="#0a5cc8"/></linearGradient></defs><path d="M1 6l8-5 10 5-8 5z" fill="url(#bk18)" stroke="#0a4fb0" stroke-width=".6"/><path d="M1 6v3l10 6 8-5V6l-8 5z" fill="#1a6ad8"/><path d="M11 11l8-5v3l-8 5z" fill="#d8ecff"/><ellipse cx="8" cy="5" rx="2.5" ry="1.2" fill="#e8c060" transform="rotate(-20 8 5)"/></svg>
<div class="t" style="left:302.80px;top:674.66px;width:220.2px;overflow:hidden;font-size:15px;font-weight:400;color:#1e1e2e;font-family:'Liberation Sans';transform:scaleX(0.9000);transform-origin:0 0;">Tổng hợp thanh toán hóa đơn</div>
<div class="a" style="left:265px;top:710px;width:10px;height:1px;background-image:linear-gradient(90deg,#999 50%,transparent 50%);background-size:2px 1px"></div>
<svg class="a" style="left:276px;top:702px" width="20" height="16" viewBox="0 0 20 16"><defs><linearGradient id="bk19" x1="0" y1="0" x2="1" y2="1"><stop offset="0" stop-color="#3aa0ff"/><stop offset="1" stop-color="#0a5cc8"/></linearGradient></defs><path d="M1 6l8-5 10 5-8 5z" fill="url(#bk19)" stroke="#0a4fb0" stroke-width=".6"/><path d="M1 6v3l10 6 8-5V6l-8 5z" fill="#1a6ad8"/><path d="M11 11l8-5v3l-8 5z" fill="#d8ecff"/><ellipse cx="8" cy="5" rx="2.5" ry="1.2" fill="#e8c060" transform="rotate(-20 8 5)"/></svg>
<div class="t" style="left:302.50px;top:699.59px;width:220.6px;overflow:hidden;font-size:15px;font-weight:400;color:#1e1e2e;font-family:'Liberation Sans';transform:scaleX(0.9000);transform-origin:0 0;">Báo cáo phân tích số lượng bán, doanh thu</div>
<div class="a" style="left:265px;top:735px;width:10px;height:1px;background-image:linear-gradient(90deg,#999 50%,transparent 50%);background-size:2px 1px"></div>
<svg class="a" style="left:276px;top:727px" width="20" height="16" viewBox="0 0 20 16"><defs><linearGradient id="bk20" x1="0" y1="0" x2="1" y2="1"><stop offset="0" stop-color="#3aa0ff"/><stop offset="1" stop-color="#0a5cc8"/></linearGradient></defs><path d="M1 6l8-5 10 5-8 5z" fill="url(#bk20)" stroke="#0a4fb0" stroke-width=".6"/><path d="M1 6v3l10 6 8-5V6l-8 5z" fill="#1a6ad8"/><path d="M11 11l8-5v3l-8 5z" fill="#d8ecff"/><ellipse cx="8" cy="5" rx="2.5" ry="1.2" fill="#e8c060" transform="rotate(-20 8 5)"/></svg>
<div class="t" style="left:301.90px;top:724.52px;width:221.2px;overflow:hidden;font-size:15px;font-weight:400;color:#1e1e2e;font-family:'Liberation Sans';transform:scaleX(0.9000);transform-origin:0 0;">Báo cáo so sánh số lượng bán, doanh thu</div>
<div class="a" style="left:515px;top:121px;width:21px;height:625px;background:#d8d8d8"></div>
<div class="a" style="left:515px;top:725px;width:21px;height:20px;background:#c4d8ef"></div>
<svg class="a" style="left:520px;top:732px" width="11" height="6" viewBox="0 0 11 6"><path d="M0 0h10L5 5z" fill="#111"/></svg>
<div class="a" style="left:229px;top:746px;width:307px;height:20px;background:#d8d8d8"></div>
<div class="a" style="left:229px;top:746px;width:20px;height:20px;background:#c9dbf1"></div>
<svg class="a" style="left:235px;top:751px" width="6" height="10" viewBox="0 0 6 10"><path d="M5 0v10L0 5z" fill="#111"/></svg>
<div class="a" style="left:251px;top:746px;width:138px;height:20px;background:#89abd4"></div>
<div class="a" style="left:495px;top:746px;width:20px;height:20px;background:#c4d8ef"></div>
<svg class="a" style="left:501px;top:751px" width="6" height="10" viewBox="0 0 6 10"><path d="M0 0v10l5-5z" fill="#111"/></svg>
<div class="a" style="left:515px;top:746px;width:21px;height:20px;background:#eeeeee"></div>
<div class="t" style="left:1312.85px;top:95.00px;font-size:15px;font-weight:400;color:#1e1e2e;font-family:'Liberation Sans';transform:scaleX(0.8989);transform-origin:0 0;">Ngôn ngữ/Language</div>
<div class="a" style="left:1461px;top:91px;width:123px;height:26px;border:1px solid #8db2dd;background:#fff"></div>
<div class="a" style="left:1562px;top:92px;width:21px;height:24px;background:#adc8e6"></div>
<svg class="a" style="left:1568px;top:101px" width="10" height="6" viewBox="0 0 10 6"><path d="M0 0h10L5 5z" fill="#111"/></svg>
<div class="t" style="left:1467.50px;top:94.00px;font-size:15px;font-weight:400;color:#1e1e2e;font-family:'Liberation Sans';transform:scaleX(0.9328);transform-origin:0 0;">Tiếng Việt</div>
<div class="a" style="left:542px;top:120px;width:1045px;height:647px;border:1px solid #3d5d8a;background:#c9dbf1"></div>
<div class="a" style="left:543px;top:121px;width:1043px;height:2px;background:#c4ccd6"></div>
<div class="a" style="left:1100px;top:222px;width:476px;height:440px;background:#fff;border-top:1px solid #555;border-right:1px solid #555"></div>
<div class="t" style="left:1177.10px;top:259.00px;font-size:14px;font-weight:700;color:#111;font-family:'Liberation Serif';transform:scaleX(1.2910);transform-origin:0 0;">VÀ KHÁCH HÀNG</div>
<div class="t" style="left:1156px;top:310px;font-family:'Liberation Serif';font-weight:bold;font-size:64px;line-height:64px;color:#9dbbec;-webkit-text-stroke:1.5px #9dbbec;transform:rotate(-40deg);transform-origin:50% 50%">ÂU</div>
<div class="a" style="left:1150px;top:295px;width:392px;height:1px;background:#444"></div>
<div class="a" style="left:1150px;top:310px;width:392px;height:1px;background:#444"></div>
<div class="a" style="left:1150px;top:342px;width:391px;height:1px;background-image:linear-gradient(90deg,#888 50%,transparent 50%);background-size:2px 1px"></div>
<div class="a" style="left:1150px;top:363px;width:391px;height:1px;background-image:linear-gradient(90deg,#888 50%,transparent 50%);background-size:2px 1px"></div>
<div class="a" style="left:1150px;top:384px;width:391px;height:1px;background-image:linear-gradient(90deg,#888 50%,transparent 50%);background-size:2px 1px"></div>
<div class="a" style="left:1150px;top:405px;width:391px;height:1px;background-image:linear-gradient(90deg,#888 50%,transparent 50%);background-size:2px 1px"></div>
<div class="a" style="left:1150px;top:427px;width:391px;height:1px;background-image:linear-gradient(90deg,#888 50%,transparent 50%);background-size:2px 1px"></div>
<div class="a" style="left:1150px;top:458px;width:391px;height:1px;background-image:linear-gradient(90deg,#888 50%,transparent 50%);background-size:2px 1px"></div>
<div class="a" style="left:1150px;top:480px;width:391px;height:1px;background-image:linear-gradient(90deg,#888 50%,transparent 50%);background-size:2px 1px"></div>
<div class="a" style="left:1150px;top:510px;width:391px;height:1px;background-image:linear-gradient(90deg,#888 50%,transparent 50%);background-size:2px 1px"></div>
<div class="a" style="left:1150px;top:532px;width:391px;height:1px;background-image:linear-gradient(90deg,#888 50%,transparent 50%);background-size:2px 1px"></div>
<div class="a" style="left:1150px;top:553px;width:391px;height:1px;background-image:linear-gradient(90deg,#888 50%,transparent 50%);background-size:2px 1px"></div>
<div class="a" style="left:1150px;top:584px;width:391px;height:1px;background-image:linear-gradient(90deg,#888 50%,transparent 50%);background-size:2px 1px"></div>
<div class="a" style="left:1150px;top:624px;width:391px;height:1px;background-image:linear-gradient(90deg,#888 50%,transparent 50%);background-size:2px 1px"></div>
<div class="a" style="left:1150px;top:639px;width:391px;height:1px;background-image:linear-gradient(90deg,#888 50%,transparent 50%);background-size:2px 1px"></div>
<div class="a" style="left:1268px;top:295px;width:1px;height:360px;background:#444"></div>
<div class="a" style="left:1397px;top:295px;width:1px;height:360px;background:#444"></div>
<div class="a" style="left:1541px;top:295px;width:1px;height:360px;background:#444"></div>
<div class="t" style="left:1171.73px;top:293.50px;font-size:10.5px;font-weight:700;color:#222;font-family:'Liberation Serif';transform:scaleX(1.2250);transform-origin:0 0;">Số lượng bán</div>
<div class="t" style="left:1296.00px;top:293.50px;font-size:10.5px;font-weight:700;color:#222;font-family:'Liberation Serif';transform:scaleX(1.2262);transform-origin:0 0;">Doanh số bán</div>
<div class="t" style="left:1422.60px;top:293.50px;font-size:10.5px;font-weight:700;color:#222;font-family:'Liberation Serif';transform:scaleX(1.2250);transform-origin:0 0;">Doanh thu thuần</div>
<div class="t" style="left:1066.5px;top:318.2px;width:200px;text-align:right;font-size:9.5px;line-height:20px;color:#666">53.330</div>
<div class="t" style="left:1195.8px;top:318.2px;width:200px;text-align:right;font-size:9.5px;line-height:20px;color:#666">908.946.000</div>
<div class="t" style="left:1339.6px;top:318.2px;width:200px;text-align:right;font-size:9.5px;line-height:20px;color:#666">908.946.000</div>
<div class="t" style="left:1066.5px;top:343.9px;width:200px;text-align:right;font-size:9.5px;line-height:20px;color:#666">27.810</div>
<div class="t" style="left:1195.8px;top:343.9px;width:200px;text-align:right;font-size:9.5px;line-height:20px;color:#666">404.635.500</div>
<div class="t" style="left:1339.6px;top:343.9px;width:200px;text-align:right;font-size:9.5px;line-height:20px;color:#666">404.635.500</div>
<div class="t" style="left:1066.5px;top:365.4px;width:200px;text-align:right;font-size:9.5px;line-height:20px;color:#666">49.700</div>
<div class="t" style="left:1195.8px;top:365.4px;width:200px;text-align:right;font-size:9.5px;line-height:20px;color:#666">710.710.000</div>
<div class="t" style="left:1339.6px;top:365.4px;width:200px;text-align:right;font-size:9.5px;line-height:20px;color:#666">710.710.000</div>
<div class="t" style="left:1066.5px;top:387px;width:200px;text-align:right;font-size:9.5px;line-height:20px;color:#666">235.170</div>
<div class="t" style="left:1195.8px;top:387px;width:200px;text-align:right;font-size:9.5px;line-height:20px;color:#666">3.292.380.000</div>
<div class="t" style="left:1339.6px;top:387px;width:200px;text-align:right;font-size:9.5px;line-height:20px;color:#666">3.292.380.000</div>
<div class="t" style="left:1066.5px;top:407.9px;width:200px;text-align:right;font-size:9.5px;line-height:20px;color:#666">11.480</div>
<div class="t" style="left:1195.8px;top:407.9px;width:200px;text-align:right;font-size:9.5px;line-height:20px;color:#666">165.312.000</div>
<div class="t" style="left:1339.6px;top:407.9px;width:200px;text-align:right;font-size:9.5px;line-height:20px;color:#666">165.312.000</div>
<div class="t" style="left:1066.5px;top:433.6px;width:200px;text-align:right;font-size:9.5px;line-height:20px;color:#666">44.950</div>
<div class="t" style="left:1195.8px;top:433.6px;width:200px;text-align:right;font-size:9.5px;line-height:20px;color:#666">670.994.000</div>
<div class="t" style="left:1339.6px;top:433.6px;width:200px;text-align:right;font-size:9.5px;line-height:20px;color:#666">670.994.000</div>
<div class="t" style="left:1066.5px;top:460.3px;width:200px;text-align:right;font-size:9.5px;line-height:20px;color:#666">27.760</div>
<div class="t" style="left:1195.8px;top:460.3px;width:200px;text-align:right;font-size:9.5px;line-height:20px;color:#666">388.640.000</div>
<div class="t" style="left:1339.6px;top:460.3px;width:200px;text-align:right;font-size:9.5px;line-height:20px;color:#666">388.640.000</div>
<div class="t" style="left:1066.5px;top:486px;width:200px;text-align:right;font-size:9.5px;line-height:20px;color:#666">37.750</div>
<div class="t" style="left:1195.8px;top:486px;width:200px;text-align:right;font-size:9.5px;line-height:20px;color:#666">551.150.000</div>
<div class="t" style="left:1339.6px;top:486px;width:200px;text-align:right;font-size:9.5px;line-height:20px;color:#666">551.150.000</div>
<div class="t" style="left:1066.5px;top:512.7px;width:200px;text-align:right;font-size:9.5px;line-height:20px;color:#666">25.930</div>
<div class="t" style="left:1195.8px;top:512.7px;width:200px;text-align:right;font-size:9.5px;line-height:20px;color:#666">368.206.000</div>
<div class="t" style="left:1339.6px;top:512.7px;width:200px;text-align:right;font-size:9.5px;line-height:20px;color:#666">368.206.000</div>
<div class="t" style="left:1066.5px;top:534px;width:200px;text-align:right;font-size:9.5px;line-height:20px;color:#666">24.970</div>
<div class="t" style="left:1195.8px;top:534px;width:200px;text-align:right;font-size:9.5px;line-height:20px;color:#666">354.574.000</div>
<div class="t" style="left:1339.6px;top:534px;width:200px;text-align:right;font-size:9.5px;line-height:20px;color:#666">354.574.000</div>
<div class="t" style="left:1066.5px;top:559.8px;width:200px;text-align:right;font-size:9.5px;line-height:20px;color:#666">301.790</div>
<div class="t" style="left:1195.8px;top:559.8px;width:200px;text-align:right;font-size:9.5px;line-height:20px;color:#666">4.367.685.000</div>
<div class="t" style="left:1339.6px;top:559.8px;width:200px;text-align:right;font-size:9.5px;line-height:20px;color:#666">4.367.685.000</div>
<div class="t" style="left:1066.5px;top:595.8px;width:200px;text-align:right;font-size:9.5px;line-height:20px;color:#666">187.900</div>
<div class="t" style="left:1195.8px;top:595.8px;width:200px;text-align:right;font-size:9.5px;line-height:20px;color:#666">2.743.340.000</div>
<div class="t" style="left:1339.6px;top:595.8px;width:200px;text-align:right;font-size:9.5px;line-height:20px;color:#666">2.743.340.000</div>
<div class="t" style="left:1195.8px;top:623.5px;width:200px;text-align:right;font-size:9.5px;line-height:20px;color:#666">223.020.000</div>
<div class="t" style="left:1339.6px;top:623.5px;width:200px;text-align:right;font-size:9.5px;line-height:20px;color:#666">223.020.000</div>
<svg class="a" style="left:1100px;top:600px" width="490" height="166" viewBox="0 0 490 166"><polygon points="0,0 50.0,41.3 52.1,42.1 54.2,41.7 56.2,42.3 58.3,42.4 60.4,40.9 62.5,40.8 64.6,42.9 66.7,41.4 68.7,41.4 70.8,43.4 72.9,42.0 75.0,42.9 77.1,42.0 79.1,42.4 81.2,41.2 83.3,42.5 85.5,41.4 87.8,38.9 90.0,37.8 92.2,36.0 94.5,32.8 96.7,33.0 98.9,32.2 101.1,31.1 103.3,30.1 105.6,32.0 107.8,30.6 110.0,30.9 112.2,31.0 114.4,30.3 116.6,31.0 118.9,29.8 121.1,31.0 123.3,30.3 125.5,31.8 127.8,31.8 130.0,30.0 132.0,30.1 134.0,30.3 136.0,32.2 138.0,30.8 140.0,31.3 142.0,30.5 144.0,31.0 146.0,30.7 148.0,30.6 150.0,31.2 152.0,32.5 154.0,34.7 156.0,35.5 158.0,37.4 160.0,38.6 162.0,40.3 164.0,40.8 166.0,40.8 168.0,43.9 170.0,45.5 172.2,46.5 174.4,46.7 176.6,48.2 178.8,48.0 181.1,50.7 183.3,51.2 185.5,51.5 187.7,52.1 189.9,54.6 192.1,55.4 194.4,53.5 196.6,55.7 198.8,55.2 201.0,52.8 203.2,51.5 205.5,51.1 207.7,49.7 209.9,45.9 212.1,45.7 214.4,42.6 216.6,42.7 218.8,40.3 221.0,40.3 223.2,39.1 225.5,36.5 227.7,36.4 229.9,33.2 232.1,31.2 234.3,33.0 236.5,31.9 238.8,32.8 241.0,33.8 243.2,35.9 245.4,36.3 247.7,37.7 249.9,41.4 252.1,41.6 254.3,43.0 256.5,42.6 258.8,41.0 261.0,40.9 263.2,40.8 265.5,40.8 267.7,40.4 269.9,40.1 272.1,41.0 274.4,42.7 276.6,42.4 278.8,43.0 281.0,44.6 283.2,44.2 285.5,45.2 287.7,47.7 289.9,47.5 292.1,48.4 294.3,47.9 296.6,49.9 298.8,51.2 301.0,50.7 303.2,50.9 305.4,49.7 307.7,47.0 309.9,47.2 312.1,45.5 314.3,44.8 316.3,43.3 318.3,43.6 320.4,43.1 322.4,40.7 324.4,40.2 326.4,41.2 328.4,41.3 330.4,38.9 332.5,38.8 334.5,38.5 336.5,37.2 338.7,36.2 341.0,35.0 343.2,34.0 345.4,33.5 347.7,31.6 349.9,30.7 352.1,33.9 354.3,34.2 356.6,37.8 358.8,40.5 361.0,41.6 363.2,43.6 365.4,46.8 367.6,47.0 369.8,48.6 372.1,50.9 374.3,53.3 376.5,53.5 378.7,52.7 380.9,51.4 383.2,51.4 385.4,49.0 387.6,48.8 389.8,45.6 392.0,43.6 394.3,41.9 396.5,40.1 398.8,36.5 401.0,33.4 403.2,35.7 405.4,39.3 407.6,40.9 409.8,45.1 412.1,47.7 414.3,48.6 416.5,51.4 418.7,55.3 420.9,53.7 423.2,53.0 425.4,50.6 427.4,50.2 429.4,50.9 431.5,52.4 433.5,51.2 435.5,51.6 437.5,52.0 439.5,52.2 441.5,52.4 443.6,53.9 445.6,52.1 447.6,51.9 449.8,52.1 452.0,49.7 454.3,47.8 456.5,44.1 458.5,43.3 460.6,41.0 462.6,36.9 464.7,36.1 466.7,34.1 468.8,39.4 471.0,44.8 473.1,50.0 475.2,56.3 480,60 480,166 0,166" fill="#c9dbf1"/><polyline points="50.0,41.3 52.1,42.1 54.2,41.7 56.2,42.3 58.3,42.4 60.4,40.9 62.5,40.8 64.6,42.9 66.7,41.4 68.7,41.4 70.8,43.4 72.9,42.0 75.0,42.9 77.1,42.0 79.1,42.4 81.2,41.2 83.3,42.5 85.5,41.4 87.8,38.9 90.0,37.8 92.2,36.0 94.5,32.8 96.7,33.0 98.9,32.2 101.1,31.1 103.3,30.1 105.6,32.0 107.8,30.6 110.0,30.9 112.2,31.0 114.4,30.3 116.6,31.0 118.9,29.8 121.1,31.0 123.3,30.3 125.5,31.8 127.8,31.8 130.0,30.0 132.0,30.1 134.0,30.3 136.0,32.2 138.0,30.8 140.0,31.3 142.0,30.5 144.0,31.0 146.0,30.7 148.0,30.6 150.0,31.2 152.0,32.5 154.0,34.7 156.0,35.5 158.0,37.4 160.0,38.6 162.0,40.3 164.0,40.8 166.0,40.8 168.0,43.9 170.0,45.5 172.2,46.5 174.4,46.7 176.6,48.2 178.8,48.0 181.1,50.7 183.3,51.2 185.5,51.5 187.7,52.1 189.9,54.6 192.1,55.4 194.4,53.5 196.6,55.7 198.8,55.2 201.0,52.8 203.2,51.5 205.5,51.1 207.7,49.7 209.9,45.9 212.1,45.7 214.4,42.6 216.6,42.7 218.8,40.3 221.0,40.3 223.2,39.1 225.5,36.5 227.7,36.4 229.9,33.2 232.1,31.2 234.3,33.0 236.5,31.9 238.8,32.8 241.0,33.8 243.2,35.9 245.4,36.3 247.7,37.7 249.9,41.4 252.1,41.6 254.3,43.0 256.5,42.6 258.8,41.0 261.0,40.9 263.2,40.8 265.5,40.8 267.7,40.4 269.9,40.1 272.1,41.0 274.4,42.7 276.6,42.4 278.8,43.0 281.0,44.6 283.2,44.2 285.5,45.2 287.7,47.7 289.9,47.5 292.1,48.4 294.3,47.9 296.6,49.9 298.8,51.2 301.0,50.7 303.2,50.9 305.4,49.7 307.7,47.0 309.9,47.2 312.1,45.5 314.3,44.8 316.3,43.3 318.3,43.6 320.4,43.1 322.4,40.7 324.4,40.2 326.4,41.2 328.4,41.3 330.4,38.9 332.5,38.8 334.5,38.5 336.5,37.2 338.7,36.2 341.0,35.0 343.2,34.0 345.4,33.5 347.7,31.6 349.9,30.7 352.1,33.9 354.3,34.2 356.6,37.8 358.8,40.5 361.0,41.6 363.2,43.6 365.4,46.8 367.6,47.0 369.8,48.6 372.1,50.9 374.3,53.3 376.5,53.5 378.7,52.7 380.9,51.4 383.2,51.4 385.4,49.0 387.6,48.8 389.8,45.6 392.0,43.6 394.3,41.9 396.5,40.1 398.8,36.5 401.0,33.4 403.2,35.7 405.4,39.3 407.6,40.9 409.8,45.1 412.1,47.7 414.3,48.6 416.5,51.4 418.7,55.3 420.9,53.7 423.2,53.0 425.4,50.6 427.4,50.2 429.4,50.9 431.5,52.4 433.5,51.2 435.5,51.6 437.5,52.0 439.5,52.2 441.5,52.4 443.6,53.9 445.6,52.1 447.6,51.9 449.8,52.1 452.0,49.7 454.3,47.8 456.5,44.1 458.5,43.3 460.6,41.0 462.6,36.9 464.7,36.1 466.7,34.1 468.8,39.4 471.0,44.8 473.1,50.0 475.2,56.3" fill="none" stroke="#7a2a2a" stroke-width="1.1"/></svg>
<div class="a" style="left:418px;top:124px;width:765px;height:580px;border:1px solid #6f9bd0;background:#c9dbf1;box-shadow:0 0 2px 1px rgba(60,50,40,.2),2px 2px 4px rgba(40,60,90,.3)"></div>
<div class="a" style="left:418px;top:124px;width:765px;height:38px;background:#6697cb"></div>
<div class="t" style="left:422.00px;top:133.75px;font-size:15.5px;font-weight:400;color:#f2f6fb;font-family:'Liberation Sans';transform:scaleX(0.9603);transform-origin:0 0;">Tổng hợp bán hàng theo mặt hàng</div>
<div class="t" style="left:1135.71px;top:134.00px;font-size:15px;font-weight:700;color:#111;font-family:'Liberation Sans';transform:scaleX(1.2857);transform-origin:0 0;">?</div>
<svg class="a" style="left:1164px;top:138px" width="10" height="10" viewBox="0 0 10 10"><path d="M1 1L9 9M9 1L1 9" stroke="#111" stroke-width="2.2"/></svg>
<div class="t" style="left:432.00px;top:170.00px;font-size:15px;font-weight:400;color:#1e1e2e;font-family:'Liberation Sans';transform:scaleX(0.9189);transform-origin:0 0;">Thống kê theo</div>
<div class="a" style="left:529px;top:167px;width:642px;height:26px;border:1px solid #8db2dd;background:#fff"></div>
<div class="a" style="left:1148px;top:168px;width:22px;height:24px;background:#fde49e"></div>
<svg class="a" style="left:1154px;top:178px" width="10" height="6" viewBox="0 0 10 6"><path d="M0 0h10L5 5z" fill="#111"/></svg>
<div class="a" style="left:536px;top:170px;width:73.3px;height:16px;background:#0078d7"></div>
<div class="a" style="left:535px;top:170px;width:1.2px;height:16px;background:#e06020"></div>
<div class="t" style="left:535.58px;top:169.50px;font-size:15px;font-weight:400;color:#fff;font-family:'Liberation Sans';transform:scaleX(0.9231);transform-origin:0 0;">Khách hàng</div>
<div class="t" style="left:431.07px;top:203.70px;font-size:15px;font-weight:400;color:#1e1e2e;font-family:'Liberation Sans';transform:scaleX(0.9254);transform-origin:0 0;">Chi nhánh</div>
<div class="a" style="left:529px;top:201px;width:279px;height:26px;border:1px solid #8db2dd;background:#fff"></div>
<div class="a" style="left:785px;top:202px;width:22px;height:24px;background:#b8cfeb"></div>
<svg class="a" style="left:791px;top:212px" width="10" height="6" viewBox="0 0 10 6"><path d="M0 0h10L5 5z" fill="#eef4fb"/></svg>
<div class="t" style="left:536.07px;top:204.00px;font-size:15px;font-weight:400;color:#111;font-family:'Liberation Sans';transform:scaleX(0.9259);transform-origin:0 0;">EURO_BNB</div>
<div class="a" style="left:819px;top:208px;width:16px;height:16px;border:1px solid #333;background:#fff"></div>
<svg class="a" style="left:819px;top:208px" width="16" height="16" viewBox="0 0 16 16"><path d="M3 8l3.5 3.5L13 4.5" fill="none" stroke="#333" stroke-width="1.6"/></svg>
<div class="t" style="left:842.68px;top:206.80px;font-size:15px;font-weight:400;color:#1e1e2e;font-family:'Liberation Sans';transform:scaleX(0.9208);transform-origin:0 0;">Bao gồm số liệu chi nhánh phụ thuộc</div>
<div class="a" style="left:431px;top:246px;width:738px;height:401px;border:1px solid #8db2dd"></div>
<div class="a" style="left:437px;top:240px;width:64px;height:12px;background:#c9dbf1"></div>
<div class="t" style="left:441.00px;top:233.75px;font-size:14.5px;font-weight:700;color:#111;font-family:'Liberation Sans';transform:scaleX(0.9525);transform-origin:0 0;">Tham số</div>
<div class="t" style="left:441.38px;top:268.40px;font-size:15px;font-weight:400;color:#1e1e2e;font-family:'Liberation Sans';transform:scaleX(0.9189);transform-origin:0 0;">Kỳ báo cáo</div>
<div class="a" style="left:529px;top:265px;width:279px;height:25px;border:1px solid #8db2dd;background:#fff"></div>
<div class="a" style="left:785px;top:266px;width:22px;height:23px;background:#adc8e6"></div>
<svg class="a" style="left:791px;top:276px" width="10" height="6" viewBox="0 0 10 6"><path d="M0 0h10L5 5z" fill="#111"/></svg>
<div class="t" style="left:535.72px;top:266.00px;font-size:15px;font-weight:400;color:#111;font-family:'Liberation Sans';transform:scaleX(0.8789);transform-origin:0 0;">Năm trước</div>
<div class="t" style="left:442.00px;top:298.40px;font-size:15px;font-weight:400;color:#1e1e2e;font-family:'Liberation Sans';transform:scaleX(0.8316);transform-origin:0 0;">Từ</div>
<div class="a" style="left:529px;top:295px;width:113px;height:25px;border:1px solid #8db2dd;background:#fff"></div>
<div class="a" style="left:619px;top:296px;width:22px;height:23px;background:#adc8e6"></div>
<svg class="a" style="left:625px;top:306px" width="10" height="6" viewBox="0 0 10 6"><path d="M0 0h10L5 5z" fill="#111"/></svg>
<div class="t" style="left:533.80px;top:297.50px;font-size:15px;font-weight:400;color:#111;font-family:'Liberation Sans';transform:scaleX(0.9000);transform-origin:0 0;">01/01/2019</div>
<div class="t" style="left:660.30px;top:298.40px;font-size:15px;font-weight:400;color:#1e1e2e;font-family:'Liberation Sans';transform:scaleX(0.9370);transform-origin:0 0;">Đến</div>
<div class="a" style="left:694px;top:295px;width:114px;height:25px;border:1px solid #8db2dd;background:#fff"></div>
<div class="a" style="left:785px;top:296px;width:22px;height:23px;background:#adc8e6"></div>
<svg class="a" style="left:791px;top:306px" width="10" height="6" viewBox="0 0 10 6"><path d="M0 0h10L5 5z" fill="#111"/></svg>
<div class="t" style="left:698.49px;top:297.50px;font-size:15px;font-weight:400;color:#111;font-family:'Liberation Sans';transform:scaleX(0.9135);transform-origin:0 0;">31/12/2019</div>
<div class="a" style="left:529px;top:331px;width:16px;height:16px;border:1px solid #333;background:#fff"></div>
<svg class="a" style="left:529px;top:331px" width="16" height="16" viewBox="0 0 16 16"><path d="M3 8l3.5 3.5L13 4.5" fill="none" stroke="#333" stroke-width="1.6"/></svg>
<div class="t" style="left:552.06px;top:328.40px;font-size:15px;font-weight:400;color:#1e1e2e;font-family:'Liberation Sans';transform:scaleX(0.9365);transform-origin:0 0;">Chỉ lấy khách hàng có phát sinh</div>
<div class="t" style="left:829.40px;top:269.00px;font-size:15px;font-weight:400;color:#1e1e2e;font-family:'Liberation Sans';transform:scaleX(0.9140);transform-origin:0 0;">Đơn vị</div>
<div class="a" style="left:919px;top:265px;width:240px;height:25px;border:1px solid #8db2dd;background:#fff"></div>
<div class="a" style="left:1136px;top:266px;width:22px;height:23px;background:#adc8e6"></div>
<svg class="a" style="left:1142px;top:276px" width="10" height="6" viewBox="0 0 10 6"><path d="M0 0h10L5 5z" fill="#111"/></svg>
<div class="t" style="left:828.46px;top:299.00px;font-size:15px;font-weight:400;color:#1e1e2e;font-family:'Liberation Sans';transform:scaleX(0.9379);transform-origin:0 0;">Nhân viên</div>
<div class="a" style="left:919px;top:295px;width:240px;height:25px;border:1px solid #8db2dd;background:#fff"></div>
<div class="a" style="left:1136px;top:296px;width:22px;height:23px;background:#adc8e6"></div>
<svg class="a" style="left:1142px;top:306px" width="10" height="6" viewBox="0 0 10 6"><path d="M0 0h10L5 5z" fill="#111"/></svg>
<div class="t" style="left:828.48px;top:328.90px;font-size:15px;font-weight:400;color:#1e1e2e;font-family:'Liberation Sans';transform:scaleX(0.9175);transform-origin:0 0;">Nhóm KH</div>
<div class="a" style="left:919px;top:325px;width:240px;height:25px;border:1px solid #8db2dd;background:#fff"></div>
<div class="a" style="left:1136px;top:326px;width:22px;height:23px;background:#adc8e6"></div>
<svg class="a" style="left:1142px;top:336px" width="10" height="6" viewBox="0 0 10 6"><path d="M0 0h10L5 5z" fill="#111"/></svg>
<div class="a" style="left:443px;top:365px;width:712px;height:267px;border:1px solid #8db2dd;border-left-width:2px;border-top-width:2px;background:#fff"></div>
<div class="a" style="left:444px;top:366px;width:710px;height:25px;background:#adc8e6"></div>
<div class="a" style="left:444px;top:390px;width:690px;height:1px;background:#8db2dd"></div>
<div class="a" style="left:513px;top:366px;width:1px;height:25px;background:#8db2dd"></div>
<div class="a" style="left:645px;top:366px;width:1px;height:25px;background:#8db2dd"></div>
<div class="a" style="left:896px;top:366px;width:1px;height:25px;background:#8db2dd"></div>
<div class="a" style="left:464px;top:371px;width:14px;height:14px;border:1px solid #f4f8fc;background:linear-gradient(135deg,#d0d4d8,#fafafa)"></div>
<svg class="a" style="left:500px;top:374px" width="12" height="9" viewBox="0 0 12 9"><path d="M0 4.5h4M4 1v7M4 2.5h5v4H4M9 1.5v6" fill="none" stroke="#111" stroke-width="1.6"/></svg>
<svg class="a" style="left:632px;top:374px" width="12" height="9" viewBox="0 0 12 9"><path d="M0 4.5h4M4 1v7M4 2.5h5v4H4M9 1.5v6" fill="none" stroke="#111" stroke-width="1.6"/></svg>
<svg class="a" style="left:883px;top:374px" width="12" height="9" viewBox="0 0 12 9"><path d="M0 4.5h4M4 1v7M4 2.5h5v4H4M9 1.5v6" fill="none" stroke="#111" stroke-width="1.6"/></svg>
<div class="t" style="left:525.58px;top:368.75px;font-size:15px;font-weight:400;color:#1e1e2e;font-family:'Liberation Sans';transform:scaleX(0.9158);transform-origin:0 0;">Mã khách hàng</div>
<div class="t" style="left:714.50px;top:368.75px;font-size:15px;font-weight:400;color:#1e1e2e;font-family:'Liberation Sans';transform:scaleX(0.9150);transform-origin:0 0;">Tên khách hàng</div>
<div class="t" style="left:1004.50px;top:368.75px;font-size:15px;font-weight:400;color:#1e1e2e;font-family:'Liberation Sans';transform:scaleX(0.9667);transform-origin:0 0;">Địa chỉ</div>
<div class="a" style="left:444px;top:391px;width:689px;height:24px;background:#fffde6"></div>
<div class="a" style="left:449px;top:395px;width:15px;height:15px;border:2px solid #3f3d78;background:#fffde6"></div>
<div class="a" style="left:453px;top:399px;width:7px;height:7px;background:#6a66cc"></div>
<div class="a" style="left:482px;top:395px;width:16px;height:16px;border:2px solid #a8a8a8;background:linear-gradient(135deg,#49b6e6,#0b4f86)"></div>
<div class="a" style="left:518px;top:395px;width:15px;height:15px;border:2px solid #3f3d78;background:#fffde6"></div>
<div class="a" style="left:522px;top:399px;width:7px;height:7px;background:#6a66cc"></div>
<div class="a" style="left:649px;top:395px;width:15px;height:15px;border:2px solid #3f3d78;background:#fffde6"></div>
<div class="a" style="left:653px;top:399px;width:7px;height:7px;background:#6a66cc"></div>
<div class="a" style="left:900.6px;top:395px;width:15px;height:15px;border:2px solid #3f3d78;background:#fffde6"></div>
<div class="a" style="left:904.6px;top:399px;width:7px;height:7px;background:#6a66cc"></div>
<div class="a" style="left:467px;top:392px;width:1px;height:22px;background-image:linear-gradient(#bbb 50%,transparent 50%);background-size:1px 3px"></div>
<div class="a" style="left:513px;top:392px;width:1px;height:22px;background-image:linear-gradient(#bbb 50%,transparent 50%);background-size:1px 3px"></div>
<div class="a" style="left:536px;top:392px;width:1px;height:22px;background-image:linear-gradient(#bbb 50%,transparent 50%);background-size:1px 3px"></div>
<div class="a" style="left:645px;top:392px;width:1px;height:22px;background-image:linear-gradient(#bbb 50%,transparent 50%);background-size:1px 3px"></div>
<div class="a" style="left:668px;top:392px;width:1px;height:22px;background-image:linear-gradient(#bbb 50%,transparent 50%);background-size:1px 3px"></div>
<div class="a" style="left:896px;top:392px;width:1px;height:22px;background-image:linear-gradient(#bbb 50%,transparent 50%);background-size:1px 3px"></div>
<div class="a" style="left:919px;top:392px;width:1px;height:22px;background-image:linear-gradient(#bbb 50%,transparent 50%);background-size:1px 3px"></div>
<div class="a" style="left:444px;top:416px;width:689px;height:1px;background-image:linear-gradient(90deg,#c8c8c8 60%,transparent 60%);background-size:3px 1px"></div>
<div class="a" style="left:513px;top:417px;width:1px;height:24px;background-image:linear-gradient(#bbb 50%,transparent 50%);background-size:1px 3px"></div>
<div class="a" style="left:645px;top:417px;width:1px;height:24px;background-image:linear-gradient(#bbb 50%,transparent 50%);background-size:1px 3px"></div>
<div class="a" style="left:896px;top:417px;width:1px;height:24px;background-image:linear-gradient(#bbb 50%,transparent 50%);background-size:1px 3px"></div>
<div class="a" style="left:470.5px;top:420.5px;width:16px;height:16px;border:1px solid #c4d8f0;background:#eef2f8"></div>
<div class="a" style="left:472.5px;top:422.5px;width:12px;height:12px;border:1px solid #b0b4ba;background:linear-gradient(135deg,#c4c8cc,#fbfbfb)"></div>
<div class="t" style="left:518.42px;top:418.80px;font-size:15.5px;font-weight:400;color:#1e1e2e;font-family:'Liberation Sans';transform:scaleX(0.8788);transform-origin:0 0;">0201706010</div>
<div class="t" style="left:650.11px;top:418.80px;font-size:15.5px;font-weight:400;color:#1e1e2e;font-family:'Liberation Sans';transform:scaleX(0.8935);transform-origin:0 0;">Công ty TNHH Thương mại và Quản...</div>
<div class="t" style="left:901.08px;top:418.80px;width:252.4px;overflow:hidden;font-size:15.5px;font-weight:400;color:#1e1e2e;font-family:'Liberation Sans';transform:scaleX(0.9189);transform-origin:0 0;">Số 272 phố Lê Thánh Tông, P.Máy Chai</div>
<div class="a" style="left:444px;top:440px;width:689px;height:1px;background-image:linear-gradient(90deg,#c8c8c8 60%,transparent 60%);background-size:3px 1px"></div>
<div class="a" style="left:513px;top:441px;width:1px;height:24px;background-image:linear-gradient(#bbb 50%,transparent 50%);background-size:1px 3px"></div>
<div class="a" style="left:645px;top:441px;width:1px;height:24px;background-image:linear-gradient(#bbb 50%,transparent 50%);background-size:1px 3px"></div>
<div class="a" style="left:896px;top:441px;width:1px;height:24px;background-image:linear-gradient(#bbb 50%,transparent 50%);background-size:1px 3px"></div>
<div class="a" style="left:470.5px;top:444.5px;width:16px;height:16px;border:1px solid #c4d8f0;background:#eef2f8"></div>
<div class="a" style="left:472.5px;top:446.5px;width:12px;height:12px;border:1px solid #b0b4ba;background:linear-gradient(135deg,#c4c8cc,#fbfbfb)"></div>
<div class="t" style="left:518.42px;top:443.65px;font-size:15.5px;font-weight:400;color:#1e1e2e;font-family:'Liberation Sans';transform:scaleX(0.8833);transform-origin:0 0;">0201706011</div>
<div class="t" style="left:650.13px;top:443.65px;font-size:15.5px;font-weight:400;color:#1e1e2e;font-family:'Liberation Sans';transform:scaleX(0.8730);transform-origin:0 0;">Cửa Hàng Kim Khí Mối Yên</div>
<div class="t" style="left:901.11px;top:443.65px;width:260.0px;overflow:hidden;font-size:15.5px;font-weight:400;color:#1e1e2e;font-family:'Liberation Sans';transform:scaleX(0.8920);transform-origin:0 0;">705 Hoàng Hoa Thám</div>
<div class="a" style="left:444px;top:465px;width:689px;height:1px;background-image:linear-gradient(90deg,#c8c8c8 60%,transparent 60%);background-size:3px 1px"></div>
<div class="a" style="left:513px;top:466px;width:1px;height:24px;background-image:linear-gradient(#bbb 50%,transparent 50%);background-size:1px 3px"></div>
<div class="a" style="left:645px;top:466px;width:1px;height:24px;background-image:linear-gradient(#bbb 50%,transparent 50%);background-size:1px 3px"></div>
<div class="a" style="left:896px;top:466px;width:1px;height:24px;background-image:linear-gradient(#bbb 50%,transparent 50%);background-size:1px 3px"></div>
<div class="a" style="left:470.5px;top:469.5px;width:16px;height:16px;border:1px solid #c4d8f0;background:#eef2f8"></div>
<div class="a" style="left:472.5px;top:471.5px;width:12px;height:12px;border:1px solid #b0b4ba;background:linear-gradient(135deg,#c4c8cc,#fbfbfb)"></div>
<div class="t" style="left:518.42px;top:468.50px;font-size:15.5px;font-weight:400;color:#1e1e2e;font-family:'Liberation Sans';transform:scaleX(0.8788);transform-origin:0 0;">0201706012</div>
<div class="t" style="left:650.10px;top:468.50px;font-size:15.5px;font-weight:400;color:#1e1e2e;font-family:'Liberation Sans';transform:scaleX(0.8952);transform-origin:0 0;">Công ty TNHH Thương Mại và Phát T...</div>
<div class="t" style="left:901.09px;top:468.50px;width:255.2px;overflow:hidden;font-size:15.5px;font-weight:400;color:#1e1e2e;font-family:'Liberation Sans';transform:scaleX(0.9087);transform-origin:0 0;">Số 129, đường 3.5 KĐT Gamuda , P.</div>
<div class="a" style="left:444px;top:490px;width:689px;height:1px;background-image:linear-gradient(90deg,#c8c8c8 60%,transparent 60%);background-size:3px 1px"></div>
<div class="a" style="left:513px;top:491px;width:1px;height:24px;background-image:linear-gradient(#bbb 50%,transparent 50%);background-size:1px 3px"></div>
<div class="a" style="left:645px;top:491px;width:1px;height:24px;background-image:linear-gradient(#bbb 50%,transparent 50%);background-size:1px 3px"></div>
<div class="a" style="left:896px;top:491px;width:1px;height:24px;background-image:linear-gradient(#bbb 50%,transparent 50%);background-size:1px 3px"></div>
<div class="a" style="left:470.5px;top:494.5px;width:16px;height:16px;border:1px solid #c4d8f0;background:#eef2f8"></div>
<div class="a" style="left:472.5px;top:496.5px;width:12px;height:12px;border:1px solid #b0b4ba;background:linear-gradient(135deg,#c4c8cc,#fbfbfb)"></div>
<div class="t" style="left:518.39px;top:493.35px;font-size:15.5px;font-weight:400;color:#1e1e2e;font-family:'Liberation Sans';transform:scaleX(0.9053);transform-origin:0 0;">11NPPngocxuan</div>
<div class="t" style="left:650.12px;top:493.35px;font-size:15.5px;font-weight:400;color:#1e1e2e;font-family:'Liberation Sans';transform:scaleX(0.8822);transform-origin:0 0;">Siêu thị Ngọc Xuân - Cao Bằng</div>
<div class="t" style="left:901.12px;top:493.35px;width:265.0px;overflow:hidden;font-size:15.5px;font-weight:400;color:#1e1e2e;font-family:'Liberation Sans';transform:scaleX(0.8750);transform-origin:0 0;">Phường Ngọc Xuân, TP. Cao Bằng</div>
<div class="a" style="left:444px;top:515px;width:689px;height:1px;background-image:linear-gradient(90deg,#c8c8c8 60%,transparent 60%);background-size:3px 1px"></div>
<div class="a" style="left:513px;top:516px;width:1px;height:24px;background-image:linear-gradient(#bbb 50%,transparent 50%);background-size:1px 3px"></div>
<div class="a" style="left:645px;top:516px;width:1px;height:24px;background-image:linear-gradient(#bbb 50%,transparent 50%);background-size:1px 3px"></div>
<div class="a" style="left:896px;top:516px;width:1px;height:24px;background-image:linear-gradient(#bbb 50%,transparent 50%);background-size:1px 3px"></div>
<div class="a" style="left:470.5px;top:519.5px;width:16px;height:16px;border:1px solid #c4d8f0;background:#eef2f8"></div>
<div class="a" style="left:472.5px;top:521.5px;width:12px;height:12px;border:1px solid #b0b4ba;background:linear-gradient(135deg,#c4c8cc,#fbfbfb)"></div>
<div class="t" style="left:518.41px;top:518.20px;font-size:15.5px;font-weight:400;color:#1e1e2e;font-family:'Liberation Sans';transform:scaleX(0.8902);transform-origin:0 0;">11NPPtruongtho</div>
<div class="t" style="left:650.12px;top:518.20px;font-size:15.5px;font-weight:400;color:#1e1e2e;font-family:'Liberation Sans';transform:scaleX(0.8778);transform-origin:0 0;">Công ty Trường Thọ - Cao Bằng</div>
<div class="t" style="left:901.11px;top:518.20px;width:261.1px;overflow:hidden;font-size:15.5px;font-weight:400;color:#1e1e2e;font-family:'Liberation Sans';transform:scaleX(0.8880);transform-origin:0 0;">Ngã 5 tổ 11 phường Đề Thám, TP Cao Bằng</div>
<div class="a" style="left:444px;top:540px;width:689px;height:1px;background-image:linear-gradient(90deg,#c8c8c8 60%,transparent 60%);background-size:3px 1px"></div>
<div class="a" style="left:513px;top:541px;width:1px;height:24px;background-image:linear-gradient(#bbb 50%,transparent 50%);background-size:1px 3px"></div>
<div class="a" style="left:645px;top:541px;width:1px;height:24px;background-image:linear-gradient(#bbb 50%,transparent 50%);background-size:1px 3px"></div>
<div class="a" style="left:896px;top:541px;width:1px;height:24px;background-image:linear-gradient(#bbb 50%,transparent 50%);background-size:1px 3px"></div>
<div class="a" style="left:470.5px;top:544.5px;width:16px;height:16px;border:1px solid #c4d8f0;background:#eef2f8"></div>
<div class="a" style="left:472.5px;top:546.5px;width:12px;height:12px;border:1px solid #b0b4ba;background:linear-gradient(135deg,#c4c8cc,#fbfbfb)"></div>
<div class="t" style="left:518.39px;top:543.05px;font-size:15.5px;font-weight:400;color:#1e1e2e;font-family:'Liberation Sans';transform:scaleX(0.9082);transform-origin:0 0;">11NPPXuanthang...</div>
<div class="t" style="left:650.11px;top:543.05px;font-size:15.5px;font-weight:400;color:#1e1e2e;font-family:'Liberation Sans';transform:scaleX(0.8925);transform-origin:0 0;">Xuân Thắng - Cao Bằng (Brelil)</div>
<div class="t" style="left:902.00px;top:543.05px;width:267.0px;overflow:hidden;font-size:15.5px;font-weight:400;color:#1e1e2e;font-family:'Liberation Sans';transform:scaleX(0.8651);transform-origin:0 0;">Tổ 28 - Phường Sông Hiến - TP Cao Bằng</div>
<div class="a" style="left:444px;top:565px;width:689px;height:1px;background-image:linear-gradient(90deg,#c8c8c8 60%,transparent 60%);background-size:3px 1px"></div>
<div class="a" style="left:513px;top:566px;width:1px;height:24px;background-image:linear-gradient(#bbb 50%,transparent 50%);background-size:1px 3px"></div>
<div class="a" style="left:645px;top:566px;width:1px;height:24px;background-image:linear-gradient(#bbb 50%,transparent 50%);background-size:1px 3px"></div>
<div class="a" style="left:896px;top:566px;width:1px;height:24px;background-image:linear-gradient(#bbb 50%,transparent 50%);background-size:1px 3px"></div>
<div class="a" style="left:470.5px;top:569.5px;width:16px;height:16px;border:1px solid #c4d8f0;background:#eef2f8"></div>
<div class="a" style="left:472.5px;top:571.5px;width:12px;height:12px;border:1px solid #b0b4ba;background:linear-gradient(135deg,#c4c8cc,#fbfbfb)"></div>
<div class="t" style="left:518.39px;top:567.90px;font-size:15.5px;font-weight:400;color:#1e1e2e;font-family:'Liberation Sans';transform:scaleX(0.9082);transform-origin:0 0;">11NPPXuanthang...</div>
<div class="t" style="left:650.11px;top:567.90px;font-size:15.5px;font-weight:400;color:#1e1e2e;font-family:'Liberation Sans';transform:scaleX(0.8878);transform-origin:0 0;">Xuân Thắng - Cao Bằng (TDO-W&amp;G)</div>
<div class="t" style="left:902.00px;top:567.90px;width:267.0px;overflow:hidden;font-size:15.5px;font-weight:400;color:#1e1e2e;font-family:'Liberation Sans';transform:scaleX(0.8650);transform-origin:0 0;">Tổ 28- Phường Sông Hiến- TP Cao Bằng</div>
<div class="a" style="left:444px;top:590px;width:689px;height:1px;background-image:linear-gradient(90deg,#c8c8c8 60%,transparent 60%);background-size:3px 1px"></div>
<div class="a" style="left:513px;top:591px;width:1px;height:24px;background-image:linear-gradient(#bbb 50%,transparent 50%);background-size:1px 3px"></div>
<div class="a" style="left:645px;top:591px;width:1px;height:24px;background-image:linear-gradient(#bbb 50%,transparent 50%);background-size:1px 3px"></div>
<div class="a" style="left:896px;top:591px;width:1px;height:24px;background-image:linear-gradient(#bbb 50%,transparent 50%);background-size:1px 3px"></div>
<div class="a" style="left:470.5px;top:594.5px;width:16px;height:16px;border:1px solid #c4d8f0;background:#eef2f8"></div>
<div class="a" style="left:472.5px;top:596.5px;width:12px;height:12px;border:1px solid #b0b4ba;background:linear-gradient(135deg,#c4c8cc,#fbfbfb)"></div>
<div class="t" style="left:518.38px;top:592.75px;font-size:15.5px;font-weight:400;color:#1e1e2e;font-family:'Liberation Sans';transform:scaleX(0.9229);transform-origin:0 0;">11OLLINH</div>
<div class="t" style="left:650.10px;top:592.75px;font-size:15.5px;font-weight:400;color:#1e1e2e;font-family:'Liberation Sans';transform:scaleX(0.8971);transform-origin:0 0;">Bùi Khánh Linh ,09140286811</div>
<div class="t" style="left:904.58px;top:592.75px;width:249.1px;overflow:hidden;font-size:15.5px;font-weight:400;color:#1e1e2e;font-family:'Liberation Sans';transform:scaleX(0.9170);transform-origin:0 0;">Số nhà 880 ,Tổ 10, Thị Trấn Trùng Khánh</div>
<div class="a" style="left:444px;top:610px;width:690px;height:21px;background:#adc8e6"></div>
<div class="a" style="left:975.5px;top:610px;width:136.5px;height:21px;background:#d4d4d4"></div>
<svg class="a" style="left:449px;top:616px" width="6" height="10" viewBox="0 0 6 10"><path d="M5 0v10L0 5z" fill="#111"/></svg>
<svg class="a" style="left:1120px;top:616px" width="6" height="10" viewBox="0 0 6 10"><path d="M0 0v10l5-5z" fill="#111"/></svg>
<div class="a" style="left:1133px;top:610px;width:21px;height:21px;background:#efefef"></div>
<div class="a" style="left:1133px;top:366px;width:21px;height:32px;background:#adc8e6"></div>
<div class="a" style="left:1133px;top:398px;width:21px;height:191px;background:#d4d4d4"></div>
<div class="a" style="left:1133px;top:589px;width:21px;height:21px;background:#adc8e6"></div>
<svg class="a" style="left:1139px;top:375px" width="10" height="6" viewBox="0 0 10 6"><path d="M0 5h10L5 0z" fill="#111"/></svg>
<svg class="a" style="left:1139px;top:597px" width="10" height="6" viewBox="0 0 10 6"><path d="M0 0h10L5 5z" fill="#111"/></svg>
<div class="a" style="left:430.5px;top:663px;width:108px;height:28px;border:1px solid #8db2dd;background:#adc8e6"></div>
<div class="t" style="left:441.55px;top:667.00px;font-size:15px;font-weight:400;color:#1e1e2e;font-family:'Liberation Sans';transform:scaleX(0.9466);transform-origin:0 0;">Xóa điều kiện</div>
<div class="a" style="left:972px;top:663px;width:93px;height:28px;border:1px solid #8db2dd;background:#adc8e6"></div>
<svg class="a" style="left:976px;top:669px" width="20" height="18" viewBox="0 0 20 18"><path d="M1 10l5 7L19 2 6 12.5z" fill="#3a8ee6" stroke="#1b6acc" stroke-width=".8"/></svg>
<div class="t" style="left:1007.00px;top:667.20px;font-size:15px;font-weight:400;color:#1e1e2e;font-family:'Liberation Sans';transform:scaleX(0.8958);transform-origin:0 0;">Đồng ý</div>
<div class="a" style="left:1077px;top:663px;width:93px;height:28px;border:1px solid #8db2dd;background:#adc8e6"></div>
<svg class="a" style="left:1081px;top:667px" width="20" height="20" viewBox="0 0 20 20"><defs><radialGradient id="cn" cx="40%" cy="35%" r="65%"><stop offset="0" stop-color="#ff8a8a"/><stop offset=".6" stop-color="#e32222"/><stop offset="1" stop-color="#b00"/></radialGradient></defs><circle cx="10" cy="10" r="9.3" fill="url(#cn)"/><circle cx="10" cy="10" r="5.5" fill="none" stroke="#fff" stroke-width="2"/><path d="M6.5 13.5l7-7" stroke="#fff" stroke-width="2"/></svg>
<div class="t" style="left:1111.57px;top:667.20px;font-size:15px;font-weight:400;color:#1e1e2e;font-family:'Liberation Sans';transform:scaleX(0.9348);transform-origin:0 0;">Hủy bỏ</div>
<div class="a" style="left:230px;top:785px;width:16px;height:16px;border:1px solid #333;background:#fff"></div>
<div class="t" style="left:253.70px;top:783.60px;font-size:15px;font-weight:400;color:#1e1e2e;font-family:'Liberation Sans';transform:scaleX(0.9018);transform-origin:0 0;">Mở rộng/Thu gọn</div>
<div class="a" style="left:367px;top:781px;width:159px;height:29px;border:1px solid #8db2dd;background:#adc8e6"></div>
<div class="t" style="left:385.00px;top:786.00px;font-size:15px;font-weight:400;color:#1e1e2e;font-family:'Liberation Sans';transform:scaleX(0.9284);transform-origin:0 0;">Tùy chỉnh báo cáo...</div>
<div class="a" style="left:1132.5px;top:781.5px;width:93px;height:28px;border:1px solid #8db2dd;background:#adc8e6"></div>
<svg class="a" style="left:1136px;top:785px" width="21" height="21" viewBox="0 0 21 21"><path d="M1.5 1.5h10l2 2v16h-12z" fill="#cfe3f8" stroke="#4e86c8"/><circle cx="13" cy="10" r="5" fill="#eaf5fd" stroke="#5b95d0" stroke-width="1.5"/><path d="M9.5 13.5l-4 4" stroke="#8a62c8" stroke-width="2.4" stroke-linecap="round"/></svg>
<div class="t" style="left:1173.64px;top:786.00px;font-size:15px;font-weight:400;color:#1e1e2e;font-family:'Liberation Sans';transform:scaleX(0.9621);transform-origin:0 0;">Xem</div>
<div class="a" style="left:1232.5px;top:781.5px;width:93px;height:28px;border:1px solid #8db2dd;background:#adc8e6"></div>
<svg class="a" style="left:1238.5px;top:786px" width="19" height="19" viewBox="0 0 19 19"><path d="M1 18L18 1v17z" fill="#d8d8d0" stroke="#9a9a90"/><path d="M6 18L18 6v12z" fill="#c8dcf0"/><path d="M4 15v3M7 12v6M10 9v9M13 6v12" stroke="#999" stroke-width=".8"/></svg>
<div class="t" style="left:1261.62px;top:786.00px;font-size:15px;font-weight:400;color:#7d8da3;font-family:'Liberation Sans';transform:scaleX(0.8850);transform-origin:0 0;">Sửa mẫu</div>
<div class="a" style="left:1332.5px;top:781.5px;width:157px;height:28px;border:1px solid #8db2dd;background:#adc8e6"></div>
<svg class="a" style="left:1338.5px;top:786px" width="19" height="19" viewBox="0 0 19 19"><path d="M1 18L18 1v17z" fill="#d8d8d0" stroke="#9a9a90"/><path d="M6 18L18 6v12z" fill="#c8dcf0"/><path d="M4 15v3M7 12v6M10 9v9M13 6v12" stroke="#999" stroke-width=".8"/></svg>
<div class="t" style="left:1364.48px;top:786.00px;font-size:15px;font-weight:400;color:#7d8da3;font-family:'Liberation Sans';transform:scaleX(0.9223);transform-origin:0 0;">Lấy mẫu mặc định</div>
<div class="a" style="left:1495px;top:781.5px;width:93.5px;height:28px;border:1px solid #8db2dd;background:#adc8e6"></div>
<svg class="a" style="left:1499px;top:786px" width="20" height="20" viewBox="0 0 20 20"><defs><radialGradient id="hp" cx="40%" cy="35%" r="65%"><stop offset="0" stop-color="#8cc8ff"/><stop offset=".6" stop-color="#2a80e0"/><stop offset="1" stop-color="#0b50b0"/></radialGradient></defs><circle cx="10" cy="10" r="9.3" fill="url(#hp)" stroke="#0a4aa0" stroke-width=".6"/><text x="10" y="15" text-anchor="middle" font-size="13" font-family="Liberation Sans" font-weight="bold" fill="#fff">?</text></svg>
<div class="t" style="left:1536.60px;top:786.00px;font-size:15px;font-weight:400;color:#1e1e2e;font-family:'Liberation Sans';">Giúp</div>
<div class="a" style="left:0px;top:821px;width:1600px;height:29px;background:#c4d7ef;border-top:1px solid #d6e4f5"></div>
<div class="a" style="left:2px;top:824px;width:247px;height:23px;border:1px solid #8db2dd;background:#adc8e6"></div>
<div class="a" style="left:253px;top:824px;width:216px;height:23px;border:1px solid #8db2dd;background:#adc8e6"></div>
<div class="a" style="left:473px;top:824px;width:145.5px;height:23px;border:1px solid #8db2dd;background:#adc8e6"></div>
<div class="a" style="left:621.5px;top:824px;width:12.0px;height:23px;border:1px solid #8db2dd;background:#adc8e6"></div>
<div class="a" style="left:636.5px;top:824px;width:444.5px;height:23px;border:1px solid #8db2dd;background:#adc8e6"></div>
<div class="a" style="left:1083.5px;top:824px;width:185.0px;height:23px;border:1px solid #8db2dd;background:#adc8e6"></div>
<div class="a" style="left:1271.5px;top:824px;width:38.0px;height:23px;border:1px solid #8db2dd;background:#adc8e6"></div>
<div class="a" style="left:1312.5px;top:824px;width:39.0px;height:23px;border:1px solid #8db2dd;background:#adc8e6"></div>
<div class="a" style="left:1355.5px;top:824px;width:45.0px;height:23px;border:1px solid #8db2dd;background:#adc8e6"></div>
<div class="a" style="left:1403.5px;top:824px;width:44.0px;height:23px;border:1px solid #8db2dd;background:#adc8e6"></div>
<div class="a" style="left:1451.5px;top:824px;width:67.0px;height:23px;border:1px solid #8db2dd;background:#adc8e6"></div>
<div class="a" style="left:1521.5px;top:824px;width:77.0px;height:23px;border:1px solid #8db2dd;background:#adc8e6"></div>
<svg class="a" style="left:4px;top:825px" width="17" height="19" viewBox="0 0 17 19"><path d="M2 3l7-2 7 2v12l-7 3-7-3z" fill="#9a8fd0" stroke="#5a4f98"/><path d="M9 1v17" stroke="#c8c0f0"/><circle cx="6.5" cy="13" r="4.5" fill="#2aa84a" stroke="#fff"/><path d="M4.5 13l1.5 1.5 3-3" fill="none" stroke="#fff" stroke-width="1.3"/></svg>
<div class="t" style="left:26.02px;top:826.20px;font-size:15.5px;font-weight:400;color:#1e1e2e;font-family:'Liberation Sans';transform:scaleX(0.8757);transform-origin:0 0;">Máy chủ: SERVER\MISASME2015</div>
<svg class="a" style="left:256px;top:826px" width="15" height="18" viewBox="0 0 15 18"><ellipse cx="7.5" cy="3.5" rx="6.5" ry="2.5" fill="#ffe060" stroke="#c99a10"/><path d="M1 3.5v11c0 1.4 2.9 2.5 6.5 2.5s6.5-1.1 6.5-2.5v-11" fill="#f8c830" stroke="#c99a10"/></svg>
<div class="t" style="left:276.70px;top:826.20px;font-size:15.5px;font-weight:400;color:#1e1e2e;font-family:'Liberation Sans';transform:scaleX(0.8854);transform-origin:0 0;">Tên DLKT: EURO_BNB_2017</div>
<svg class="a" style="left:476px;top:825px" width="16" height="18" viewBox="0 0 16 18"><circle cx="9" cy="5" r="4" fill="#f2c010" stroke="#8a6a10" stroke-width=".6"/><path d="M5 3.5c1-3 6-3 8 0" fill="#333"/><path d="M1 17c0-5 3-7 8-7s6 2 6 7z" fill="#8cc4f0" stroke="#4a8ad0" stroke-width=".7"/></svg>
<div class="t" style="left:495.84px;top:826.20px;font-size:15.5px;font-weight:400;color:#1e1e2e;font-family:'Liberation Sans';transform:scaleX(0.8636);transform-origin:0 0;">Người dùng: admin</div>
<div class="t" style="left:1087.40px;top:826.20px;font-size:15.5px;font-weight:700;color:#111;font-family:'Liberation Sans';transform:scaleX(0.8975);transform-origin:0 0;">Tổng đài tư vấn: 1900 8677</div>
<div class="t" style="left:1273.56px;top:826.20px;font-size:15.5px;font-weight:400;color:#1e1e2e;font-family:'Liberation Sans';transform:scaleX(0.9375);transform-origin:0 0;">OVR</div>
<div class="t" style="left:1453.61px;top:826.20px;font-size:15.5px;font-weight:400;color:#1e1e2e;font-family:'Liberation Sans';transform:scaleX(0.8889);transform-origin:0 0;">9:19 SA</div>
<div class="t" style="left:1524.11px;top:826.20px;font-size:15.5px;font-weight:400;color:#1e1e2e;font-family:'Liberation Sans';transform:scaleX(0.8882);transform-origin:0 0;">08/01/2020</div>
<div class="a" style="left:0px;top:850px;width:1600px;height:50px;background:#25292a"></div>
<div class="a" style="left:620px;top:850px;width:61px;height:50px;background:#a5602c"></div>
<div class="a" style="left:620px;top:897px;width:61px;height:3px;background:#ff7a00"></div>
<div class="a" style="left:806px;top:850px;width:61px;height:50px;background:#a5602c"></div>
<div class="a" style="left:806px;top:897px;width:61px;height:3px;background:#ff7a00"></div>
<div class="a" style="left:129px;top:897px;width:51px;height:3px;background:#76b9ed"></div>
<div class="a" style="left:191px;top:897px;width:51px;height:3px;background:#76b9ed"></div>
<div class="a" style="left:315px;top:897px;width:51px;height:3px;background:#76b9ed"></div>
<svg class="a" style="left:20px;top:865px" width="21" height="20" viewBox="0 0 21 20"><path d="M0 2.8L8.5 1.6v7.9H0zM9.6 1.4L21 0v9.5H9.6zM0 10.5h8.5v7.9L0 17.2zM9.6 10.5H21V20L9.6 18.6z" fill="#fff"/></svg>
<svg class="a" style="left:79px;top:865px" width="21" height="20" viewBox="0 0 21 20"><circle cx="12.5" cy="8" r="6.8" fill="none" stroke="#fff" stroke-width="1.6"/><path d="M7.8 12.8L1 19.6" stroke="#fff" stroke-width="1.8"/></svg>
<svg class="a" style="left:140px;top:863px" width="28" height="23" viewBox="0 0 28 23"><path d="M0 2h9l2 2h17v18H0z" fill="#f4c84a"/><path d="M0 6h28v16H0z" fill="#ffe08a"/><rect x="2" y="2" width="6" height="2" fill="#fff" opacity=".8"/><path d="M6 13h16v9h-3v-5H9v5H6z" fill="#2d9be0"/><rect x="9" y="20" width="10" height="2.5" fill="#1e78c8"/></svg>
<svg class="a" style="left:202px;top:861px" width="28" height="28" viewBox="0 0 28 28"><circle cx="14" cy="14" r="13.5" fill="#db4437"/><path d="M14 14L26.7 9.5A13.5 13.5 0 0 1 14 27.5z" fill="#fbc02d"/><path d="M14 14L14 27.5A13.5 13.5 0 0 1 1.3 9.3z" fill="#0f9d58"/><path d="M14 14L1.3 9.3 A13.5 13.5 0 0 1 5 4.5z" fill="#db4437"/><circle cx="14" cy="14" r="6" fill="#fff"/><circle cx="14" cy="14" r="4.8" fill="#4285f4"/></svg>
<svg class="a" style="left:263px;top:859px" width="30" height="31" viewBox="0 0 30 31"><path d="M2 3l22-2v17L2 20z" fill="#dfe6ee" stroke="#8a96a4"/><path d="M4 5l18-1.5v12.5L4 17z" fill="#1f5fd6"/><path d="M6 6l10-1-6 10z" fill="#5aa0ff" opacity=".7"/><path d="M9 20h8l2 4H7z" fill="#888"/><circle cx="23" cy="24" r="6.5" fill="#e8e8e8" stroke="#999"/><path d="M19.5 23l3-2.5M26.5 25l-3 2.5" stroke="#2a9a3a" stroke-width="1.6"/></svg>
<svg class="a" style="left:325px;top:860px" width="33" height="32" viewBox="0 0 33 32"><path d="M14 1c6.5 0 12 2.2 12 11 0 8-4.8 10.5-10.5 10.5l-4.5 4v-4C5 21 2 18 2 12 2 3.5 7.5 1 14 1z" fill="#fff" stroke="#7d5bd0" stroke-width="1.8"/><path d="M9.5 7.5c1-1 2-.8 2.6.3l1 1.8c.4.8 0 1.3-.6 1.8.6 1.5 1.9 2.8 3.4 3.4.5-.6 1-1 1.8-.6l1.8 1c1.1.6 1.3 1.6.3 2.6-2 2-6.2-.2-8.5-2.6S7.5 9.5 9.5 7.5z" fill="#7d5bd0"/><path d="M15 5.5a5.5 5.5 0 0 1 5 5M15 8a3 3 0 0 1 2.5 2.5" fill="none" stroke="#7d5bd0" stroke-width="1"/><rect x="19" y="16" width="14" height="15" rx="4" fill="#f33"/><text x="26" y="28" text-anchor="middle" font-size="12" font-family="Liberation Sans" font-weight="bold" fill="#fff">1</text></svg>
<svg class="a" style="left:387px;top:864px" width="29" height="22" viewBox="0 0 29 22"><rect x="0.5" y="1" width="28" height="20" rx="2" fill="#f2f2f2"/><path d="M0.5 3v18h5V8l9 6.5 9-6.5v13h5V3l-14 10z" fill="#d93025"/><path d="M0.5 3l14 10 14-10V2H0.5z" fill="#e8453c"/><path d="M14.5 13L0.5 3h28z" fill="#f2f2f2" opacity=".0"/></svg>
<svg class="a" style="left:449px;top:863px" width="26" height="25" viewBox="0 0 26 25"><path d="M3 1h21v23H3z" fill="#5fa7d0"/><path d="M1 2h20v21H1z" fill="#a7d0ea"/><circle cx="12" cy="12.5" r="7.5" fill="#f7841e"/><path d="M9.5 8.5l6.5 4-6.5 4z" fill="#fff"/></svg>
<svg class="a" style="left:510px;top:861px" width="31" height="28" viewBox="0 0 31 28"><rect x="9" y="0" width="22" height="28" rx="2" fill="#2b7cd3"/><rect x="9" y="7" width="22" height="7" fill="#185abd"/><rect x="9" y="14" width="22" height="7" fill="#103f91"/><rect x="0" y="6" width="17" height="16" rx="1.5" fill="#185abd"/><text x="8.5" y="19" text-anchor="middle" font-size="12" font-family="Liberation Sans" font-weight="bold" fill="#fff">W</text></svg>
<svg class="a" style="left:572px;top:861px" width="31" height="28" viewBox="0 0 31 28"><rect x="9" y="0" width="22" height="28" rx="2" fill="#21a366"/><rect x="20" y="0" width="11" height="14" fill="#33c481"/><rect x="9" y="14" width="22" height="14" fill="#107c41"/><rect x="0" y="6" width="17" height="16" rx="1.5" fill="#107c41"/><text x="8.5" y="19" text-anchor="middle" font-size="12" font-family="Liberation Sans" font-weight="bold" fill="#fff">X</text></svg>
<svg class="a" style="left:635px;top:859px" width="34" height="34" viewBox="0 0 34 34"><path d="M9 2h14c4.5 0 7 2.5 7 7v13c0 4.5-2.5 7-7 7H9c-2 0-3.5-.3-4.5-1-1 .8-2.5 1.2-4 1 1-1 1.5-2.3 1.5-3.5-1-1.2-1.5-2.5-1.5-4.5V9c0-4.5 2.5-7 7-7z" fill="#0068ff"/><path d="M10 2h13c4.5 0 7 2.5 7 7v13c0 4.5-2.5 7-7 7h-10c-2 0-3.5-.5-4.5-1.5C4.5 26 3 24 3 20V9c0-4.5 2.5-7 7-7z" fill="#fff"/><text x="6.5" y="17" font-size="10" font-family="Liberation Sans" font-weight="bold" fill="#0a6cf0">Zalo</text><circle cx="22" cy="23" r="10" fill="#f01010"/><text x="22" y="28" text-anchor="middle" font-size="12" font-family="Liberation Sans" fill="#fff">5+</text></svg>
<svg class="a" style="left:697px;top:860px" width="30" height="30" viewBox="0 0 30 30"><circle cx="15" cy="15" r="14.8" fill="#2f86d6"/><rect x="7.5" y="8.5" width="15" height="10" fill="#fff"/><path d="M9 17l12-7v7z" fill="#2f86d6"/><path d="M12 21h6M15 18.5v2.5" stroke="#fff" stroke-width="1.6"/></svg>
<svg class="a" style="left:761px;top:863px" width="26" height="26" viewBox="0 0 26 26"><path d="M2 12C2 5 7.5 0.5 14 0.5 21 0.5 25.5 5.5 25.5 12.5v2H9c.3 4.5 3.5 6.8 7.5 6.8 3 0 5.5-1 7.5-2.3v5C22 25.3 19 26 16 26 7.5 26 2 20.5 2 12zm7.2-1.5h9.5c0-3-2-5-4.7-5-2.8 0-4.6 2-4.8 5z" fill="#1b8ae8"/><path d="M1 11c1-6 7-10 13-10-4 1-8 4-9 9z" fill="#0b66c2"/></svg>
<svg class="a" style="left:821px;top:860px" width="31" height="31" viewBox="0 0 31 31"><path d="M15.2 15.2L8.53 2.10A14.7 14.7 0 0 1 28.30 8.53Z" fill="#f0b21e"/><path d="M15.2 15.2L28.30 8.53A14.7 14.7 0 0 1 21.87 28.30Z" fill="#2c43c0"/><path d="M15.2 15.2L21.87 28.30A14.7 14.7 0 0 1 2.10 21.87Z" fill="#08914a"/><path d="M15.2 15.2L2.10 21.87A14.7 14.7 0 0 1 8.53 2.10Z" fill="#c81e2c"/><rect x="12.0" y="12.0" width="6.4" height="6.4" transform="rotate(-27 15.2 15.2)" fill="#fff"/></svg>
<div class="a" style="left:862px;top:850px;width:5px;height:47px;background:#9a5422"></div>
<svg class="a" style="left:1151px;top:863px" width="28" height="28" viewBox="0 0 28 28"><circle cx="14" cy="14" r="13" fill="#1d9be9" stroke="#fff" stroke-width="2"/><text x="14" y="21" text-anchor="middle" font-size="19" font-family="Liberation Sans" font-weight="bold" fill="#fff">?</text></svg>
<svg class="a" style="left:1193px;top:870px" width="18" height="10" viewBox="0 0 18 10"><path d="M1 9L9 1l8 8" fill="none" stroke="#fff" stroke-width="1.4"/></svg>
<svg class="a" style="left:1222px;top:870px" width="21" height="11" viewBox="0 0 21 11"><rect x="0.7" y="0.7" width="17.5" height="9.5" fill="none" stroke="#fff" stroke-width="1.4"/><rect x="3" y="3" width="9" height="5" fill="#fff"/><rect x="18.5" y="3.5" width="2" height="4" fill="#fff"/></svg>
<svg class="a" style="left:1254px;top:867px" width="17" height="16" viewBox="0 0 17 16"><path d="M1 15A14 14 0 0 1 15 1M4.5 15A10.5 10.5 0 0 1 15 4.5M8 15a7 7 0 0 1 7-7M11.5 15a3.5 3.5 0 0 1 3.5-3.5" fill="none" stroke="#ddd" stroke-width="1.2"/><circle cx="14.5" cy="14.5" r="1.6" fill="#fff"/></svg>
<svg class="a" style="left:1281px;top:867px" width="22" height="16" viewBox="0 0 22 16"><path d="M1.5 5.5h4l5-4.5v14l-5-4.5h-4z" fill="none" stroke="#fff" stroke-width="1.3"/><path d="M13.5 5a4 4 0 0 1 0 6M16 3a7 7 0 0 1 0 10M18.5 1a10 10 0 0 1 0 14" fill="none" stroke="#ccc" stroke-width="1.2"/></svg>
<svg class="a" style="left:1312px;top:868px" width="21" height="14" viewBox="0 0 21 14"><path d="M5 13.5C2.5 13.5 0.5 11.8 0.5 9.5S2.3 5.8 4.5 5.8C5.3 2.8 7.8 0.5 11 0.5c3.3 0 5.8 2.3 6.3 5.2 2 .1 3.4 1.7 3.4 3.8 0 2.2-1.7 4-3.9 4z" fill="#fff"/><path d="M10.5 4.5l-4 4h2.5v4h3v-4h2.5z" fill="#25292a"/></svg>
<svg class="a" style="left:1342px;top:868px" width="21" height="14" viewBox="0 0 21 14"><path d="M5 13.5C2.5 13.5 0.5 11.8 0.5 9.5S2.3 5.8 4.5 5.8C5.3 2.8 7.8 0.5 11 0.5c3.3 0 5.8 2.3 6.3 5.2 2 .1 3.4 1.7 3.4 3.8 0 2.2-1.7 4-3.9 4z" fill="#fff"/><path d="M10.5 4.5l-4 4h2.5v4h3v-4h2.5z" fill="#25292a"/></svg>
<svg class="a" style="left:1372px;top:868px" width="21" height="14" viewBox="0 0 21 14"><path d="M5 13.5C2.5 13.5 0.5 11.8 0.5 9.5S2.3 5.8 4.5 5.8C5.3 2.8 7.8 0.5 11 0.5c3.3 0 5.8 2.3 6.3 5.2 2 .1 3.4 1.7 3.4 3.8 0 2.2-1.7 4-3.9 4z" fill="#fff"/><path d="M10.5 4.5l-4 4h2.5v4h3v-4h2.5z" fill="#25292a"/></svg>
<div class="t" style="left:1404.07px;top:866.00px;font-size:15px;font-weight:400;color:#fff;font-family:'Liberation Sans';transform:scaleX(0.9290);transform-origin:0 0;">ENG</div>
<div class="t" style="left:1462.56px;top:853.70px;font-size:15px;font-weight:400;color:#fff;font-family:'Liberation Sans';transform:scaleX(0.9385);transform-origin:0 0;">9:19 SA</div>
<div class="t" style="left:1449.48px;top:876.70px;font-size:15px;font-weight:400;color:#fff;font-family:'Liberation Sans';transform:scaleX(1.0189);transform-origin:0 0;">08/01/2020</div>
<svg class="a" style="left:1548px;top:865px" width="32" height="31" viewBox="0 0 32 31"><path d="M0.7 0.7h20.5v14H9l-4 4v-4H0.7z" fill="#fff"/><path d="M4 4.5h14M4 7.5h14M4 10.5h14" stroke="#22272a" stroke-width="1"/><circle cx="20.5" cy="20" r="9.5" fill="#25292a" stroke="#aaa" stroke-width="1"/><text x="20.5" y="25" text-anchor="middle" font-size="13" font-family="Liberation Sans" fill="#fff">3</text></svg>
<div class="a" style="left:1594px;top:850px;width:1px;height:50px;background:#777"></div>
<div class="a" style="left:1599px;top:85px;width:1px;height:737px;background:#aabbd0"></div>
</body></html>
